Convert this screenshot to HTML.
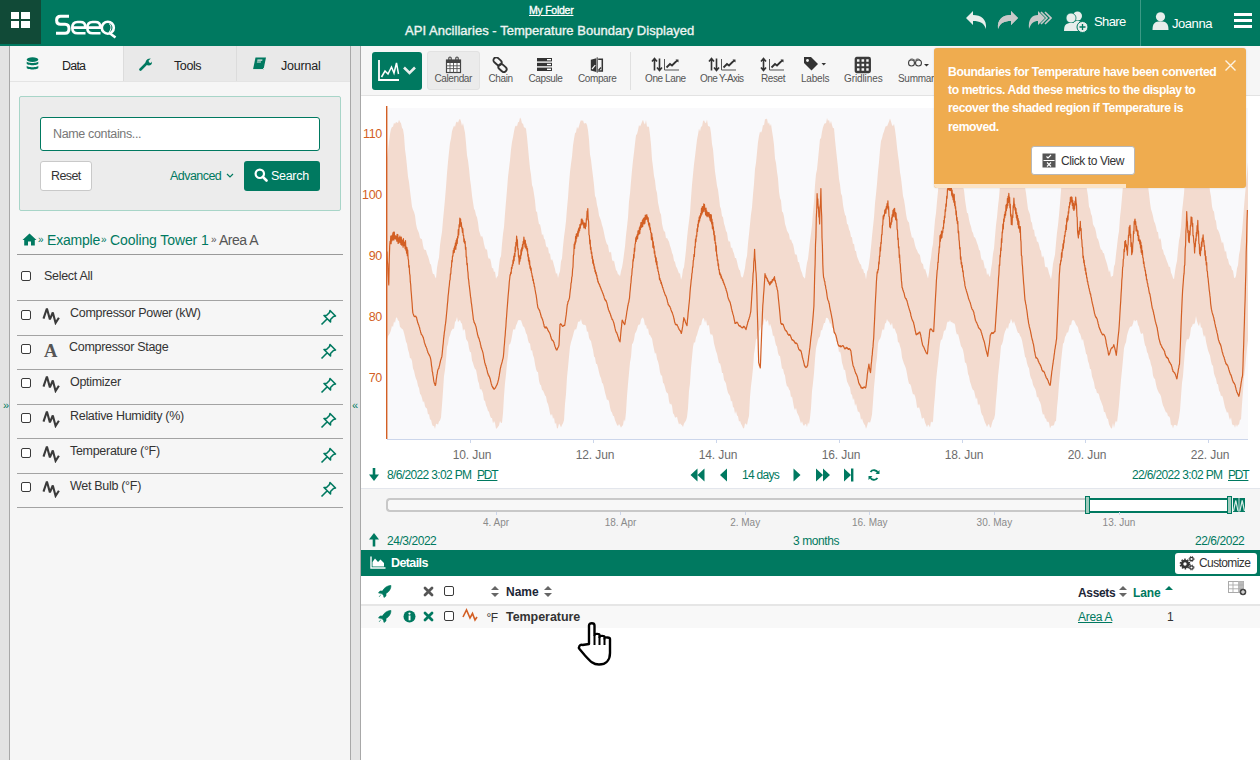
<!DOCTYPE html>
<html><head><meta charset="utf-8">
<style>
*{box-sizing:border-box}
html,body{margin:0;padding:0;width:1260px;height:760px;overflow:hidden;background:#fff;font-family:"Liberation Sans",sans-serif;color:#333}
.a{position:absolute;white-space:nowrap;line-height:1}
.g{color:#007960}
.cb{position:absolute;width:10px;height:10px;border:1.1px solid #3a3a3a;border-radius:2px;background:#fff}
.tl{position:absolute;font-size:10px;color:#555;line-height:1;white-space:nowrap;letter-spacing:-0.4px}
.xl{position:absolute;font-size:12px;color:#6d6d6d;line-height:1;white-space:nowrap;width:60px;text-align:center;letter-spacing:-0.1px}
.yl{position:absolute;font-size:12.5px;color:#d35f24;line-height:1;white-space:nowrap;width:40px;text-align:right;letter-spacing:-0.3px}
.sl{position:absolute;font-size:10px;color:#8a8a8a;line-height:1;white-space:nowrap;width:60px;text-align:center}
.it{position:absolute;font-size:12.5px;color:#333;line-height:1;white-space:nowrap;letter-spacing:-0.3px}
</style></head><body>
<!-- HEADER -->
<div class="a" style="left:0;top:0;width:1260px;height:46px;background:#007960"></div>
<div class="a" style="left:0;top:0;width:41px;height:44px;background:#114a37"></div>
<div class="a" style="left:11px;top:12px;width:8px;height:7px;background:#fff"></div>
<div class="a" style="left:21px;top:12px;width:9px;height:7px;background:#fff"></div>
<div class="a" style="left:11px;top:21px;width:8px;height:7px;background:#fff"></div>
<div class="a" style="left:21px;top:21px;width:9px;height:7px;background:#fff"></div>
<svg class="a" style="left:54px;top:13px" width="64" height="27" viewBox="54 13 64 27">
 <path d="M69 16.3 H60.5 C57.5 16.3 56.6 18 56.6 20.3 C56.6 22.8 57.8 24.3 60.5 24.3 H65 C67.8 24.3 69 25.8 69 28.8 C69 31.8 67.8 33.3 65 33.3 H56" stroke="#fff" stroke-width="3" fill="none"/>
 <path d="M85.5 33.3 H77.5 C74.2 33.3 72.3 31.5 72.3 27.8 C72.3 24 74.2 22 77.5 22 H80.5 C83.8 22 85.2 23.6 85.2 26.5 V27.6 H73.5" stroke="#fff" stroke-width="2.6" fill="none"/>
 <path d="M100.5 33.3 H92.5 C89.2 33.3 87.3 31.5 87.3 27.8 C87.3 24 89.2 22 92.5 22 H95.5 C98.8 22 100.2 23.6 100.2 26.5 V27.6 H88.5" stroke="#fff" stroke-width="2.6" fill="none"/>
 <circle cx="107.8" cy="27.7" r="6" stroke="#fff" stroke-width="2.6" fill="none"/>
 <path d="M109 23.5 C111.5 25 111.5 30 109 32" stroke="#fff" stroke-width="1" fill="none"/>
 <path d="M109.5 33 L115.5 37.5" stroke="#fff" stroke-width="2.6"/>
</svg>
<div id="myfolder" class="a" style="left:529px;top:4.8px;font-size:10.5px;font-weight:400;color:#fff;text-decoration:underline;letter-spacing:-0.25px;-webkit-text-stroke:0.35px #fff">My Folder</div>
<div id="title" class="a" style="left:405px;top:23.5px;font-size:13px;color:#eef4f2;letter-spacing:0.04px;-webkit-text-stroke:0.35px #eef4f2">API Ancillaries - Temperature Boundary Displayed</div>
<!-- undo/redo -->
<svg class="a" style="left:964px;top:10px" width="90" height="22" viewBox="0 0 90 22">
 <path d="M2 8 L9 1 L9 5 C17 5 23 9 22 19 C20 13 16 11 9 11 L9 15 Z" fill="#e8eeec"/>
 <path d="M54 8 L47 1 L47 5 C39 5 33 9 34 19 C36 13 40 11 47 11 L47 15 Z" transform="translate(0,0)" fill="#c9c9c9"/>
 <path d="M35 8 L28 1 L28 5 C20 5 14 9 15 19 C17 13 21 11 28 11 L28 15 Z" transform="translate(0,0)" fill="none"/>
 <path d="M54 8 L47 1 L47 5 C39 5 33 9 34 19 C36 13 40 11 47 11 L47 15 Z" transform="translate(31,0) translate(-31,0) translate(0,0)" fill="none"/>
</svg>
<svg class="a" style="left:996px;top:11px" width="24" height="20" viewBox="0 0 24 20">
 <path d="M22 7 L15 0 L15 4 C7 4 1 8 2 18 C4 12 8 10 15 10 L15 14 Z" fill="#c9c9c9"/>
</svg>
<svg class="a" style="left:1028px;top:11px" width="24" height="20" viewBox="0 0 24 20">
 <path d="M17 7 L10 0 L10 4 C4 4 0 8 1 18 C3 12 6 10 10 10 L10 14 Z" fill="#c9c9c9"/>
 <path d="M13 1 L19 7 L13 13 M17 1 L23 7 L17 13" stroke="#c9c9c9" stroke-width="1.6" fill="none"/>
</svg>
<svg class="a" style="left:1063px;top:11px" width="28" height="22" viewBox="0 0 28 22">
 <circle cx="14.5" cy="5" r="4.5" fill="#e8eeec"/>
 <path d="M9 18 C9 12 11 10 14.5 10 C18 10 20 12 20 18 Z" fill="#e8eeec"/>
 <circle cx="8" cy="7" r="5" fill="#e8eeec" stroke="#007960" stroke-width="0.8"/>
 <path d="M1 20 C1 14 3 12 8 12 C13 12 15 14 15 20 Z" fill="#e8eeec"/>
 <circle cx="19.5" cy="16" r="5.5" fill="#e8eeec" stroke="#007960" stroke-width="1"/>
 <path d="M19.5 13 V19 M16.5 16 H22.5" stroke="#007960" stroke-width="1.3"/>
</svg>
<div id="share" class="a" style="left:1094px;top:15px;font-size:13px;color:#fff;letter-spacing:-0.6px">Share</div>
<div class="a" style="left:1140px;top:0;width:1px;height:46px;background:#3c9a86"></div>
<svg class="a" style="left:1152px;top:12px" width="17" height="19" viewBox="0 0 17 19">
 <circle cx="8.5" cy="4.8" r="4.6" fill="#e8eeec"/>
 <path d="M0.5 18 C0.5 11 3 9.5 8.5 9.5 C14 9.5 16.5 11 16.5 18 Z" fill="#e8eeec"/>
</svg>
<div id="joanna" class="a" style="left:1172px;top:17px;font-size:13px;color:#fff;letter-spacing:-0.45px">Joanna</div>
<div class="a" style="left:1234px;top:13px;width:18px;height:3px;background:#fff"></div>
<div class="a" style="left:1234px;top:19px;width:18px;height:3px;background:#fff"></div>
<div class="a" style="left:1234px;top:25px;width:18px;height:3px;background:#fff"></div>

<!-- LEFT PANEL -->
<div class="a" style="left:0;top:46px;width:9px;height:714px;background:#e3e3e3"></div>
<div class="a" style="left:9px;top:46px;width:1px;height:714px;background:#a8a8a8"></div>
<div class="a" style="left:10px;top:46px;width:340px;height:714px;background:#f6f6f6"></div>
<div class="a" style="left:350px;top:46px;width:1px;height:714px;background:#a8a8a8"></div>
<div class="a" style="left:351px;top:46px;width:9px;height:714px;background:#e4e4e4"></div>
<div class="a" style="left:360px;top:46px;width:1px;height:714px;background:#a8a8a8"></div>
<div class="a" style="left:3px;top:400px;font-size:11px;color:#007960">&#187;</div>
<div class="a" style="left:352px;top:400px;font-size:11px;color:#007960">&#171;</div>
<!-- tabs -->
<div class="a" style="left:10px;top:81px;width:340px;height:1px;background:#e4e4e4"></div>
<div class="a" style="left:123px;top:46px;width:113px;height:35px;background:#e9e9e9;border-left:1px solid #dcdcdc"></div>
<div class="a" style="left:236px;top:46px;width:114px;height:35px;background:#e9e9e9;border-left:1px solid #dcdcdc"></div>
<svg class="a" style="left:25.5px;top:57px" width="13" height="15" viewBox="0 0 13 15">
 <ellipse cx="6.5" cy="2.6" rx="5.8" ry="2.4" fill="#007960"/>
 <path d="M0.7 4.2 C0.7 6.5 12.3 6.5 12.3 4.2 V6.6 C12.3 8.9 0.7 8.9 0.7 6.6 Z" fill="#007960"/>
 <path d="M0.7 8.4 C0.7 10.7 12.3 10.7 12.3 8.4 V10.8 C12.3 13.1 0.7 13.1 0.7 10.8 Z" fill="#007960"/>
</svg>
<div class="a" style="left:62px;top:59.5px;font-size:12.5px;color:#222;letter-spacing:-0.8px">Data</div>
<svg class="a" style="left:139px;top:57px" width="14" height="14" viewBox="0 0 14 14">
 <path d="M1.5 12.5 L7.5 6.5" stroke="#007960" stroke-width="2.6" stroke-linecap="round"/>
 <path d="M7 7.5 C5.5 4.5 8 1 11.8 1.5 L9.5 3.8 L10.2 5.5 L12 6 L13 4.5 C13.5 8 10 10 7 7.5Z" fill="#007960"/>
</svg>
<div class="a" style="left:174px;top:59.5px;font-size:12.5px;color:#222;letter-spacing:-0.4px">Tools</div>
<svg class="a" style="left:252px;top:57px" width="15" height="14" viewBox="0 0 15 14">
 <path d="M3.5 0.5 H14 L11.5 12.5 H1 Z" fill="#007960"/>
 <path d="M1 12.5 H11 L11.8 11" stroke="#f0f0f0" stroke-width="0.8" fill="none"/>
 <rect x="6" y="2.5" width="5" height="1.2" fill="#e9e9e9" transform="skewX(-12)"/>
 <rect x="6" y="4.5" width="4" height="1" fill="#e9e9e9" transform="skewX(-12)"/>
</svg>
<div class="a" style="left:281px;top:59.5px;font-size:12.5px;color:#222;letter-spacing:-0.2px">Journal</div>
<!-- search box -->
<div class="a" style="left:19px;top:96px;width:322px;height:115px;background:#ececec;border:1px solid #a8d5c8;border-radius:2px"></div>
<div class="a" style="left:40px;top:117px;width:280px;height:34px;background:#fff;border:1px solid #007960;border-radius:3px"></div>
<div class="a" style="left:53px;top:127.5px;font-size:12.5px;color:#777;letter-spacing:-0.35px">Name contains...</div>
<div class="a" style="left:40px;top:161px;width:52px;height:30px;background:#fff;border:1px solid #c9c9c9;border-radius:3px"></div>
<div class="a" style="left:51px;top:170px;font-size:12.5px;color:#333;letter-spacing:-0.6px">Reset</div>
<div class="a" style="left:170px;top:170px;font-size:12.5px;color:#007960;letter-spacing:-0.55px">Advanced</div>
<svg class="a" style="left:226px;top:173px" width="8" height="6" viewBox="0 0 8 6"><path d="M1 1 L4 4 L7 1" stroke="#007960" stroke-width="1.2" fill="none"/></svg>
<div class="a" style="left:244px;top:161px;width:76px;height:30px;background:#007960;border-radius:3px"></div>
<svg class="a" style="left:254px;top:168px" width="14" height="14" viewBox="0 0 14 14">
 <circle cx="5.8" cy="5.8" r="4.2" stroke="#fff" stroke-width="2.2" fill="none"/>
 <path d="M8.8 8.8 L12.5 12.5" stroke="#fff" stroke-width="2.6" stroke-linecap="round"/>
</svg>
<div class="a" style="left:271px;top:170px;font-size:12.5px;color:#fff;letter-spacing:-0.3px">Search</div>
<!-- breadcrumb -->
<svg class="a" style="left:22px;top:233px" width="15" height="13" viewBox="0 0 15 13">
 <path d="M7.5 0.5 L14.5 7 L12.8 7 L12.8 12.5 L9 12.5 L9 8.5 L6 8.5 L6 12.5 L2.2 12.5 L2.2 7 L0.5 7 Z" fill="#007960"/>
</svg>
<div class="a" style="left:38px;top:235px;font-size:10px;color:#007960">&#187;</div>
<div class="a" style="left:47px;top:233px;font-size:14px;color:#007960;letter-spacing:-0.2px">Example</div>
<div class="a" style="left:101px;top:235px;font-size:10px;color:#007960">&#187;</div>
<div class="a" style="left:110px;top:233px;font-size:14px;color:#007960;letter-spacing:-0.1px">Cooling Tower 1</div>
<div class="a" style="left:211px;top:235px;font-size:10px;color:#555">&#187;</div>
<div class="a" style="left:219px;top:233px;font-size:14px;color:#555;letter-spacing:-0.5px">Area A</div>
<div class="a" style="left:17px;top:254px;width:326px;height:1px;background:#9a9a9a"></div>
<div class="cb" style="left:21px;top:271px"></div>
<div class="it" style="left:44px;top:269.5px">Select All</div>
<div class="a" style="left:17px;top:300px;width:326px;height:1.3px;background:#a3a3a3"></div>
<div class="a" style="left:17px;top:335px;width:326px;height:1.3px;background:#a3a3a3"></div>
<div class="a" style="left:17px;top:369px;width:326px;height:1.3px;background:#a3a3a3"></div>
<div class="a" style="left:17px;top:404px;width:326px;height:1.3px;background:#a3a3a3"></div>
<div class="a" style="left:17px;top:438px;width:326px;height:1.3px;background:#a3a3a3"></div>
<div class="a" style="left:17px;top:473px;width:326px;height:1.3px;background:#a3a3a3"></div>
<div class="a" style="left:17px;top:507px;width:326px;height:1.3px;background:#a3a3a3"></div>
<div class="cb" style="left:21px;top:309.8px"></div>
<svg class="a" style="left:42px;top:306.0px" width="19" height="19" viewBox="0 0 19 19"><path d="M1.5 12.6 L4.9 2.5 L7.9 13.4 L10.8 6.5 L13.6 16.9 L16.9 11.8" stroke="#3a3a3a" stroke-width="2.1" fill="none" stroke-linejoin="miter" stroke-miterlimit="3"/></svg>
<div class="it" style="left:70px;top:307.2px">Compressor Power (kW)</div>
<svg class="a" style="left:320px;top:308.8px" width="17" height="17" viewBox="0 0 17 17"><path d="M10 1.5 L15.5 7 L13.5 7.5 L10.5 10.5 L10.5 13 L4 6.5 L6.5 6.5 L9.5 3.5 Z M7 10 L1.5 15.5" stroke="#007960" stroke-width="1.6" fill="none" stroke-linejoin="round"/></svg>
<div class="cb" style="left:21px;top:344.0px"></div>
<div class="a" style="left:44px;top:342.0px;font-family:'Liberation Serif';font-size:18.5px;font-weight:700;color:#555">A</div>
<div class="it" style="left:69px;top:341.4px">Compressor Stage</div>
<svg class="a" style="left:320px;top:343.0px" width="17" height="17" viewBox="0 0 17 17"><path d="M10 1.5 L15.5 7 L13.5 7.5 L10.5 10.5 L10.5 13 L4 6.5 L6.5 6.5 L9.5 3.5 Z M7 10 L1.5 15.5" stroke="#007960" stroke-width="1.6" fill="none" stroke-linejoin="round"/></svg>
<div class="cb" style="left:21px;top:378.2px"></div>
<svg class="a" style="left:42px;top:374.4px" width="19" height="19" viewBox="0 0 19 19"><path d="M1.5 12.6 L4.9 2.5 L7.9 13.4 L10.8 6.5 L13.6 16.9 L16.9 11.8" stroke="#3a3a3a" stroke-width="2.1" fill="none" stroke-linejoin="miter" stroke-miterlimit="3"/></svg>
<div class="it" style="left:70px;top:375.6px">Optimizer</div>
<svg class="a" style="left:320px;top:377.2px" width="17" height="17" viewBox="0 0 17 17"><path d="M10 1.5 L15.5 7 L13.5 7.5 L10.5 10.5 L10.5 13 L4 6.5 L6.5 6.5 L9.5 3.5 Z M7 10 L1.5 15.5" stroke="#007960" stroke-width="1.6" fill="none" stroke-linejoin="round"/></svg>
<div class="cb" style="left:21px;top:412.7px"></div>
<svg class="a" style="left:42px;top:408.9px" width="19" height="19" viewBox="0 0 19 19"><path d="M1.5 12.6 L4.9 2.5 L7.9 13.4 L10.8 6.5 L13.6 16.9 L16.9 11.8" stroke="#3a3a3a" stroke-width="2.1" fill="none" stroke-linejoin="miter" stroke-miterlimit="3"/></svg>
<div class="it" style="left:70px;top:410.1px">Relative Humidity (%)</div>
<svg class="a" style="left:320px;top:411.7px" width="17" height="17" viewBox="0 0 17 17"><path d="M10 1.5 L15.5 7 L13.5 7.5 L10.5 10.5 L10.5 13 L4 6.5 L6.5 6.5 L9.5 3.5 Z M7 10 L1.5 15.5" stroke="#007960" stroke-width="1.6" fill="none" stroke-linejoin="round"/></svg>
<div class="cb" style="left:21px;top:447.8px"></div>
<svg class="a" style="left:42px;top:444.0px" width="19" height="19" viewBox="0 0 19 19"><path d="M1.5 12.6 L4.9 2.5 L7.9 13.4 L10.8 6.5 L13.6 16.9 L16.9 11.8" stroke="#3a3a3a" stroke-width="2.1" fill="none" stroke-linejoin="miter" stroke-miterlimit="3"/></svg>
<div class="it" style="left:70px;top:445.2px">Temperature (°F)</div>
<svg class="a" style="left:320px;top:446.8px" width="17" height="17" viewBox="0 0 17 17"><path d="M10 1.5 L15.5 7 L13.5 7.5 L10.5 10.5 L10.5 13 L4 6.5 L6.5 6.5 L9.5 3.5 Z M7 10 L1.5 15.5" stroke="#007960" stroke-width="1.6" fill="none" stroke-linejoin="round"/></svg>
<div class="cb" style="left:21px;top:482.3px"></div>
<svg class="a" style="left:42px;top:478.5px" width="19" height="19" viewBox="0 0 19 19"><path d="M1.5 12.6 L4.9 2.5 L7.9 13.4 L10.8 6.5 L13.6 16.9 L16.9 11.8" stroke="#3a3a3a" stroke-width="2.1" fill="none" stroke-linejoin="miter" stroke-miterlimit="3"/></svg>
<div class="it" style="left:70px;top:479.7px">Wet Bulb (°F)</div>
<svg class="a" style="left:320px;top:481.3px" width="17" height="17" viewBox="0 0 17 17"><path d="M10 1.5 L15.5 7 L13.5 7.5 L10.5 10.5 L10.5 13 L4 6.5 L6.5 6.5 L9.5 3.5 Z M7 10 L1.5 15.5" stroke="#007960" stroke-width="1.6" fill="none" stroke-linejoin="round"/></svg>

<!-- RIGHT PANE -->
<div class="a" style="left:361px;top:46px;width:899px;height:50px;background:#f6f6f6;border-bottom:1px solid #e3e3e3"></div>
<div class="a" style="left:372px;top:52px;width:50px;height:38px;background:#007960;border-radius:3px"></div>
<svg class="a" style="left:372px;top:52px" width="50" height="38" viewBox="0 0 50 38">
 <path d="M7 8 V28 H27" stroke="#fff" stroke-width="1.8" fill="none"/>
 <path d="M9.5 25 L13 19 L16 22 L19.5 15 L22 21 L24.5 11 L26.5 22" stroke="#fff" stroke-width="1.5" fill="none"/>
 <path d="M32 15.5 L37.5 21 L43 15.5" stroke="#e8eeec" stroke-width="2.6" fill="none"/>
</svg>
<div class="a" style="left:427px;top:51px;width:53px;height:39px;background:#ebebeb;border-radius:3px;border:1px solid #e2e2e2"></div>
<!-- calendar -->
<svg class="a" style="left:445px;top:56px" width="17" height="18" viewBox="0 0 17 18">
 <rect x="1.5" y="4" width="14" height="12.5" fill="#fff" stroke="#444" stroke-width="1.2"/>
 <rect x="1.5" y="4" width="14" height="3" fill="#444"/>
 <path d="M1.5 9.8 H15.5 M1.5 12.6 H15.5 M5 7 V16.5 M8.5 7 V16.5 M12 7 V16.5" stroke="#555" stroke-width="0.9"/>
 <path d="M3.8 5 V2.2 A1.2 1.2 0 0 1 6.2 2.2 V5 M10.8 5 V2.2 A1.2 1.2 0 0 1 13.2 2.2 V5" stroke="#444" stroke-width="1.1" fill="none"/>
</svg>
<div class="tl" style="left:434.5px;top:74px">Calendar</div>
<!-- chain -->
<svg class="a" style="left:492px;top:57px" width="17" height="16" viewBox="0 0 17 16">
 <rect x="1" y="1.5" width="9" height="5.6" rx="2.8" transform="rotate(42 5.5 4.3)" fill="none" stroke="#333" stroke-width="1.9"/>
 <rect x="6" y="8.3" width="9" height="5.6" rx="2.8" transform="rotate(42 10.5 11.1)" fill="none" stroke="#333" stroke-width="1.9"/>
</svg>
<div class="tl" style="left:488.5px;top:74px">Chain</div>
<!-- capsule -->
<svg class="a" style="left:536px;top:57px" width="17" height="15" viewBox="0 0 17 15">
 <rect x="1" y="1" width="15" height="3.4" fill="#333"/>
 <rect x="1" y="5.8" width="15" height="3.4" fill="#333"/>
 <rect x="1" y="10.6" width="15" height="3.4" fill="#333"/>
 <rect x="11" y="2" width="4" height="1.4" fill="#fff"/>
 <rect x="11" y="6.8" width="4" height="1.4" fill="#fff"/>
 <rect x="11" y="11.6" width="4" height="1.4" fill="#fff"/>
</svg>
<div class="tl" style="left:528.5px;top:74px">Capsule</div>
<!-- compare -->
<svg class="a" style="left:590px;top:57px" width="14" height="16" viewBox="0 0 14 16">
 <path d="M0.8 2.8 L6.3 1.2 V15 L0.8 13.4 Z" fill="#333"/>
 <path d="M2 12 L5.3 8.2" stroke="#f6f6f6" stroke-width="1.2"/>
 <path d="M7.2 0.3 V15.7" stroke="#333" stroke-width="1"/>
 <path d="M8.2 2.2 H12.3 V14 H8.2" fill="none" stroke="#333" stroke-width="1.5"/>
 <path d="M8.6 13.2 L11 10.5" stroke="#333" stroke-width="1.4"/>
</svg>
<div class="tl" style="left:578px;top:74px">Compare</div>
<div class="a" style="left:630px;top:52px;width:1px;height:38px;background:#e0e0e0"></div>
<!-- one lane -->
<svg class="a" style="left:651px;top:57px" width="30" height="15" viewBox="0 0 30 15">
 <path d="M3.5 13.5 V2 M1 4.5 L3.5 1.5 L6 4.5" stroke="#333" stroke-width="1.6" fill="none"/>
 <path d="M8.5 1.5 V13 M6 10.5 L8.5 13.5 L11 10.5" stroke="#333" stroke-width="1.6" fill="none"/>
 <path d="M13.5 2 V13 H28" stroke="#555" stroke-width="1" fill="none"/>
 <path d="M15.5 10.5 L19 7 L21 8.5 L24.5 5 L26.5 3.5" stroke="#333" stroke-width="1.8" fill="none"/><path d="M24.5 2.5 H27.5 V5.5 Z" fill="#333"/>
</svg>
<div class="tl" style="left:645px;top:74px">One Lane</div>
<svg class="a" style="left:708px;top:57px" width="30" height="15" viewBox="0 0 30 15">
 <path d="M3.5 13.5 V2 M1 4.5 L3.5 1.5 L6 4.5" stroke="#333" stroke-width="1.6" fill="none"/>
 <path d="M8.5 1.5 V13 M6 10.5 L8.5 13.5 L11 10.5" stroke="#333" stroke-width="1.6" fill="none"/>
 <path d="M13.5 2 V13 H28" stroke="#555" stroke-width="1" fill="none"/>
 <path d="M15.5 10.5 L19 7 L21 8.5 L24.5 5 L26.5 3.5" stroke="#333" stroke-width="1.8" fill="none"/><path d="M24.5 2.5 H27.5 V5.5 Z" fill="#333"/>
</svg>
<div class="tl" style="left:700px;top:74px;letter-spacing:-0.6px">One Y-Axis</div>
<svg class="a" style="left:760px;top:57px" width="26" height="15" viewBox="0 0 26 15">
 <path d="M3.5 13 V2 M1 4.5 L3.5 1.5 L6 4.5 M1 10.5 L3.5 13.5 L6 10.5" stroke="#333" stroke-width="1.6" fill="none"/>
 <path d="M9.5 2 V13 H24" stroke="#555" stroke-width="1" fill="none"/>
 <path d="M11.5 10.5 L15 7 L17 8.5 L20.5 5 L22.5 3.5" stroke="#333" stroke-width="1.8" fill="none"/><path d="M20.5 2.5 H23.5 V5.5 Z" fill="#333"/>
</svg>
<div class="tl" style="left:761px;top:74px">Reset</div>
<svg class="a" style="left:803px;top:56px" width="24" height="16" viewBox="0 0 24 16">
 <path d="M1 1 H8 L15 8 L8.5 14.5 L1 7 Z" fill="#333"/>
 <circle cx="4.5" cy="4.5" r="1.4" fill="#f6f6f6"/>
 <path d="M18.5 7 L23 7 L20.75 9.5 Z" fill="#333"/>
</svg>
<div class="tl" style="left:801px;top:74px;letter-spacing:-0.2px">Labels</div>
<svg class="a" style="left:854px;top:56px" width="18" height="18" viewBox="0 0 18 18">
 <rect x="1.8" y="2" width="14" height="14" rx="1" fill="none" stroke="#3a3a3a" stroke-width="2.3"/>
 <path d="M6.5 2 V16 M11.2 2 V16 M1.8 6.7 H15.8 M1.8 11.3 H15.8" stroke="#3a3a3a" stroke-width="2.1"/>
</svg>
<div class="tl" style="left:844px;top:74px;letter-spacing:-0.1px">Gridlines</div>
<svg class="a" style="left:906px;top:57px" width="26" height="12" viewBox="0 0 26 12">
 <circle cx="5.5" cy="6" r="3" fill="none" stroke="#444" stroke-width="1.1"/>
 <circle cx="12.5" cy="6" r="3" fill="none" stroke="#444" stroke-width="1.1"/>
 <path d="M3 4 C4 1.5 7 1.5 9 3.5 C10.5 1.5 13 1.5 15 4" stroke="#444" stroke-width="1" fill="none"/>
 <path d="M18 7 L23 7 L20.5 9.5 Z" fill="#333"/>
</svg>
<div class="tl" style="left:898px;top:74px;letter-spacing:-0.3px">Summary</div>

<svg class="a" style="left:0;top:0" width="1260" height="760" viewBox="0 0 1260 760">
<rect x="387" y="108" width="861" height="331" fill="#f9f9fb"/>
<path d="M387,157.9 L388,150.2 L389,141.9 L390,134.0 L391,129.0 L392,126.9 L393,126.8 L394,122.7 L395,123.9 L396,121.9 L397,122.5 L398,122.9 L399,119.7 L400,122.0 L401,123.2 L402,127.8 L403,129.2 L404,135.5 L405,149.5 L406,156.8 L407,166.2 L408,176.7 L409,182.0 L410,190.7 L411,198.5 L412,206.7 L413,209.7 L414,212.1 L415,215.4 L416,223.8 L417,228.5 L418,230.7 L419,233.3 L420,238.1 L421,238.8 L422,239.2 L423,245.5 L424,249.4 L425,249.7 L426,250.3 L427,254.1 L428,256.3 L429,259.5 L430,263.7 L431,264.5 L432,270.0 L433,274.3 L434,273.7 L435,276.8 L436,278.6 L437,267.7 L438,261.8 L439,257.6 L440,245.3 L441,238.0 L442,232.0 L443,219.9 L444,209.7 L445,199.1 L446,187.0 L447,173.2 L448,161.8 L449,151.9 L450,143.1 L451,138.4 L452,131.3 L453,128.3 L454,125.6 L455,126.9 L456,122.6 L457,121.5 L458,122.7 L459,119.9 L460,118.8 L461,121.4 L462,126.0 L463,123.1 L464,128.0 L465,132.8 L466,143.0 L467,155.3 L468,160.4 L469,168.4 L470,179.1 L471,186.0 L472,195.5 L473,202.3 L474,208.7 L475,210.4 L476,215.2 L477,217.2 L478,222.6 L479,230.5 L480,233.6 L481,237.0 L482,235.7 L483,238.4 L484,243.9 L485,248.0 L486,249.7 L487,249.2 L488,257.0 L489,258.9 L490,258.3 L491,261.9 L492,268.4 L493,267.7 L494,272.3 L495,271.3 L496,278.7 L497,276.8 L498,275.9 L499,265.8 L500,258.3 L501,256.2 L502,244.0 L503,234.0 L504,226.9 L505,213.6 L506,201.6 L507,189.8 L508,177.0 L509,168.5 L510,160.2 L511,149.6 L512,142.1 L513,137.2 L514,131.6 L515,126.7 L516,125.5 L517,126.5 L518,122.2 L519,121.9 L520,117.4 L521,119.1 L522,123.4 L523,123.4 L524,127.4 L525,127.5 L526,128.8 L527,137.0 L528,147.5 L529,158.4 L530,168.4 L531,174.7 L532,184.9 L533,187.8 L534,194.1 L535,200.7 L536,211.5 L537,211.8 L538,218.8 L539,224.2 L540,224.2 L541,228.7 L542,235.5 L543,233.7 L544,238.8 L545,239.7 L546,245.8 L547,247.6 L548,247.2 L549,253.7 L550,253.2 L551,260.4 L552,259.1 L553,261.4 L554,265.4 L555,269.0 L556,274.1 L557,272.7 L558,277.9 L559,273.9 L560,271.2 L561,261.3 L562,258.4 L563,246.5 L564,236.9 L565,229.8 L566,220.9 L567,208.2 L568,197.8 L569,183.4 L570,172.0 L571,163.8 L572,156.8 L573,145.6 L574,138.9 L575,133.2 L576,132.3 L577,126.8 L578,129.0 L579,126.1 L580,122.4 L581,120.1 L582,121.1 L583,120.2 L584,123.5 L585,123.3 L586,123.1 L587,125.1 L588,130.3 L589,139.5 L590,154.5 L591,159.8 L592,168.4 L593,176.2 L594,185.1 L595,195.9 L596,198.1 L597,205.1 L598,208.7 L599,215.6 L600,217.9 L601,220.8 L602,225.0 L603,228.0 L604,232.8 L605,237.7 L606,241.5 L607,244.2 L608,245.1 L609,251.5 L610,252.8 L611,251.6 L612,259.5 L613,261.4 L614,260.6 L615,265.4 L616,269.9 L617,271.2 L618,274.5 L619,274.4 L620,276.5 L621,271.1 L622,267.6 L623,261.7 L624,254.0 L625,246.4 L626,235.2 L627,226.7 L628,217.5 L629,201.6 L630,193.5 L631,181.6 L632,170.2 L633,160.4 L634,152.4 L635,143.4 L636,135.3 L637,133.9 L638,130.3 L639,125.0 L640,126.4 L641,124.4 L642,121.8 L643,119.7 L644,122.9 L645,124.5 L646,120.0 L647,126.7 L648,126.4 L649,126.9 L650,134.7 L651,144.6 L652,159.2 L653,167.0 L654,175.9 L655,180.6 L656,189.4 L657,193.1 L658,202.4 L659,207.2 L660,212.4 L661,214.6 L662,223.6 L663,228.2 L664,231.4 L665,231.5 L666,238.5 L667,237.7 L668,240.0 L669,241.8 L670,245.8 L671,248.4 L672,252.8 L673,254.9 L674,260.8 L675,262.1 L676,266.6 L677,267.9 L678,270.7 L679,273.4 L680,273.3 L681,279.8 L682,276.7 L683,269.4 L684,267.2 L685,259.0 L686,250.1 L687,238.3 L688,229.1 L689,221.3 L690,213.0 L691,198.3 L692,184.8 L693,174.5 L694,164.2 L695,156.5 L696,147.9 L697,139.7 L698,134.4 L699,128.4 L700,131.6 L701,126.6 L702,126.5 L703,121.2 L704,120.3 L705,122.6 L706,123.3 L707,119.4 L708,126.1 L709,126.2 L710,126.9 L711,132.9 L712,144.0 L713,149.2 L714,160.6 L715,171.6 L716,178.4 L717,185.7 L718,189.8 L719,197.6 L720,206.6 L721,209.1 L722,216.2 L723,217.1 L724,223.6 L725,226.6 L726,231.1 L727,232.6 L728,239.7 L729,242.1 L730,241.1 L731,248.3 L732,247.2 L733,251.2 L734,253.6 L735,257.9 L736,258.1 L737,261.5 L738,266.3 L739,269.6 L740,270.5 L741,276.0 L742,277.7 L743,276.8 L744,272.8 L745,267.7 L746,259.8 L747,255.9 L748,243.3 L749,234.2 L750,224.3 L751,214.3 L752,207.5 L753,194.5 L754,183.7 L755,169.1 L756,162.8 L757,152.6 L758,142.1 L759,135.9 L760,131.5 L761,132.8 L762,130.6 L763,124.7 L764,125.5 L765,119.1 L766,119.3 L767,118.6 L768,124.0 L769,122.2 L770,126.2 L771,123.7 L772,131.0 L773,137.1 L774,145.0 L775,158.6 L776,163.0 L777,171.8 L778,178.5 L779,191.5 L780,198.2 L781,200.6 L782,211.5 L783,212.5 L784,216.8 L785,223.8 L786,227.1 L787,230.7 L788,232.6 L789,234.2 L790,240.0 L791,239.3 L792,242.5 L793,244.0 L794,248.6 L795,254.8 L796,254.0 L797,255.8 L798,262.3 L799,262.1 L800,267.1 L801,270.5 L802,272.7 L803,276.4 L804,277.4 L805,278.8 L806,269.6 L807,262.8 L808,259.1 L809,249.9 L810,241.1 L811,233.4 L812,225.0 L813,211.4 L814,201.6 L815,184.9 L816,173.9 L817,169.4 L818,159.4 L819,149.3 L820,139.1 L821,138.2 L822,131.8 L823,127.3 L824,124.6 L825,123.0 L826,123.6 L827,118.1 L828,120.9 L829,119.8 L830,123.9 L831,121.0 L832,124.9 L833,128.3 L834,128.1 L835,139.8 L836,149.5 L837,158.6 L838,167.5 L839,179.0 L840,184.6 L841,193.4 L842,195.7 L843,204.8 L844,210.5 L845,214.8 L846,216.2 L847,224.0 L848,224.5 L849,229.5 L850,231.4 L851,236.9 L852,237.2 L853,244.3 L854,243.5 L855,250.8 L856,250.9 L857,256.4 L858,259.1 L859,261.5 L860,264.0 L861,264.4 L862,269.6 L863,268.6 L864,273.0 L865,273.3 L866,279.6 L867,271.7 L868,269.8 L869,264.0 L870,256.2 L871,246.9 L872,236.2 L873,226.8 L874,217.4 L875,203.2 L876,194.0 L877,183.7 L878,171.5 L879,161.9 L880,150.1 L881,140.9 L882,138.3 L883,134.0 L884,131.6 L885,128.0 L886,125.7 L887,126.4 L888,124.1 L889,121.6 L890,118.5 L891,121.4 L892,125.1 L893,126.2 L894,123.8 L895,129.8 L896,137.2 L897,147.0 L898,155.2 L899,162.0 L900,172.3 L901,178.0 L902,186.4 L903,196.1 L904,199.7 L905,206.0 L906,213.7 L907,219.2 L908,221.4 L909,222.6 L910,229.3 L911,233.5 L912,237.9 L913,237.2 L914,240.5 L915,245.2 L916,248.5 L917,250.3 L918,252.8 L919,254.0 L920,255.2 L921,261.6 L922,263.6 L923,264.0 L924,269.8 L925,268.5 L926,271.8 L927,275.2 L928,278.4 L929,272.4 L930,263.2 L931,257.6 L932,248.8 L933,244.0 L934,231.7 L935,219.9 L936,212.9 L937,201.4 L938,191.2 L939,175.5 L940,164.6 L941,157.0 L942,145.3 L943,138.1 L944,138.6 L945,129.6 L946,129.2 L947,128.8 L948,123.5 L949,120.2 L950,122.8 L951,116.8 L952,122.3 L953,123.5 L954,121.8 L955,123.7 L956,126.3 L957,130.4 L958,140.8 L959,150.2 L960,160.8 L961,166.2 L962,179.0 L963,187.0 L964,190.1 L965,199.6 L966,206.2 L967,213.0 L968,213.2 L969,219.6 L970,223.8 L971,226.5 L972,231.2 L973,232.9 L974,236.9 L975,237.6 L976,239.7 L977,242.9 L978,245.5 L979,249.8 L980,250.8 L981,257.6 L982,260.5 L983,259.5 L984,263.9 L985,269.3 L986,267.5 L987,275.2 L988,273.0 L989,275.7 L990,277.1 L991,269.5 L992,263.3 L993,253.8 L994,248.5 L995,236.4 L996,225.1 L997,217.2 L998,206.2 L999,197.8 L1000,185.2 L1001,169.7 L1002,162.5 L1003,152.2 L1004,143.9 L1005,140.8 L1006,135.5 L1007,127.4 L1008,129.7 L1009,122.9 L1010,123.8 L1011,120.2 L1012,119.4 L1013,118.8 L1014,120.1 L1015,123.7 L1016,122.0 L1017,123.7 L1018,129.3 L1019,134.8 L1020,143.7 L1021,156.8 L1022,165.3 L1023,169.8 L1024,182.5 L1025,187.2 L1026,192.9 L1027,201.3 L1028,209.3 L1029,211.7 L1030,214.5 L1031,221.6 L1032,222.7 L1033,229.9 L1034,229.2 L1035,237.0 L1036,236.0 L1037,241.9 L1038,241.4 L1039,244.9 L1040,249.4 L1041,251.0 L1042,257.8 L1043,255.4 L1044,258.2 L1045,266.2 L1046,267.4 L1047,266.8 L1048,268.9 L1049,273.3 L1050,276.0 L1051,279.5 L1052,272.9 L1053,263.7 L1054,259.0 L1055,254.5 L1056,243.0 L1057,232.6 L1058,224.9 L1059,215.1 L1060,203.6 L1061,190.4 L1062,176.6 L1063,165.7 L1064,160.1 L1065,149.5 L1066,140.9 L1067,137.1 L1068,132.7 L1069,127.5 L1070,128.8 L1071,124.8 L1072,120.2 L1073,119.3 L1074,122.3 L1075,118.4 L1076,122.2 L1077,123.3 L1078,127.2 L1079,126.6 L1080,127.3 L1081,138.1 L1082,146.8 L1083,157.5 L1084,165.6 L1085,172.6 L1086,183.6 L1087,190.1 L1088,195.9 L1089,206.8 L1090,208.7 L1091,213.8 L1092,216.2 L1093,224.3 L1094,226.3 L1095,228.1 L1096,232.1 L1097,238.1 L1098,238.9 L1099,242.3 L1100,246.8 L1101,249.8 L1102,249.8 L1103,252.9 L1104,253.3 L1105,257.8 L1106,260.7 L1107,264.1 L1108,268.1 L1109,272.4 L1110,269.9 L1111,277.6 L1112,275.7 L1113,276.3 L1114,266.3 L1115,263.9 L1116,254.3 L1117,246.1 L1118,237.3 L1119,231.2 L1120,217.3 L1121,208.6 L1122,197.0 L1123,185.8 L1124,171.5 L1125,163.8 L1126,153.6 L1127,144.6 L1128,137.5 L1129,134.0 L1130,130.4 L1131,128.3 L1132,126.3 L1133,121.0 L1134,122.0 L1135,121.5 L1136,119.4 L1137,124.1 L1138,123.3 L1139,121.3 L1140,127.2 L1141,127.0 L1142,133.2 L1143,145.9 L1144,155.1 L1145,161.4 L1146,170.1 L1147,179.6 L1148,185.7 L1149,193.5 L1150,202.6 L1151,209.2 L1152,212.3 L1153,216.3 L1154,221.2 L1155,223.3 L1156,226.8 L1157,232.0 L1158,231.7 L1159,239.9 L1160,237.7 L1161,240.3 L1162,248.7 L1163,249.9 L1164,254.3 L1165,255.4 L1166,258.7 L1167,261.5 L1168,264.1 L1169,267.3 L1170,266.5 L1171,272.7 L1172,274.7 L1173,278.3 L1174,279.2 L1175,271.4 L1176,265.3 L1177,260.9 L1178,250.1 L1179,240.5 L1180,235.7 L1181,226.9 L1182,211.5 L1183,203.0 L1184,193.4 L1185,178.0 L1186,169.7 L1187,157.1 L1188,146.5 L1189,139.5 L1190,134.3 L1191,129.6 L1192,130.9 L1193,128.7 L1194,122.3 L1195,124.4 L1196,122.8 L1197,120.5 L1198,120.4 L1199,120.4 L1200,124.4 L1201,122.1 L1202,128.9 L1203,127.7 L1204,135.9 L1205,148.1 L1206,156.9 L1207,165.9 L1208,172.7 L1209,182.5 L1210,191.2 L1211,196.4 L1212,206.3 L1213,210.5 L1214,211.5 L1215,219.3 L1216,221.1 L1217,229.0 L1218,230.1 L1219,232.3 L1220,235.2 L1221,239.5 L1222,243.6 L1223,241.6 L1224,247.0 L1225,252.2 L1226,250.4 L1227,257.9 L1228,259.3 L1229,263.8 L1230,265.4 L1231,266.1 L1232,270.0 L1233,270.5 L1234,277.5 L1235,278.3 L1236,275.8 L1237,268.3 L1238,265.2 L1239,254.7 L1240,250.1 L1241,239.4 L1242,231.8 L1243,219.9 L1244,207.0 L1245,195.0 L1246,184.2 L1247,173.5 L1248,162.3 L1248,340.4 L1247,348.0 L1246,358.6 L1245,369.7 L1244,377.0 L1243,391.3 L1242,404.2 L1241,419.7 L1240,419.4 L1239,424.8 L1238,424.6 L1237,426.9 L1236,424.2 L1235,427.7 L1234,424.7 L1233,425.6 L1232,423.7 L1231,417.2 L1230,419.9 L1229,417.1 L1228,411.7 L1227,413.0 L1226,410.0 L1225,407.5 L1224,402.9 L1223,398.1 L1222,395.4 L1221,396.3 L1220,392.2 L1219,390.6 L1218,384.3 L1217,383.9 L1216,378.8 L1215,376.4 L1214,373.6 L1213,365.7 L1212,364.9 L1211,361.2 L1210,355.4 L1209,353.0 L1208,350.3 L1207,345.9 L1206,341.6 L1205,334.9 L1204,336.9 L1203,333.6 L1202,327.2 L1201,328.1 L1200,322.1 L1199,326.2 L1198,324.3 L1197,321.3 L1196,315.9 L1195,322.5 L1194,324.5 L1193,323.5 L1192,326.4 L1191,327.6 L1190,335.2 L1189,338.5 L1188,339.7 L1187,338.7 L1186,342.8 L1185,350.3 L1184,362.8 L1183,375.9 L1182,382.9 L1181,396.6 L1180,410.6 L1179,417.7 L1178,422.3 L1177,426.4 L1176,424.7 L1175,425.2 L1174,424.8 L1173,428.6 L1172,424.5 L1171,425.6 L1170,418.1 L1169,416.3 L1168,416.2 L1167,412.5 L1166,412.6 L1165,410.3 L1164,407.4 L1163,405.6 L1162,401.7 L1161,396.4 L1160,394.2 L1159,392.9 L1158,391.1 L1157,388.6 L1156,384.5 L1155,379.1 L1154,378.2 L1153,375.6 L1152,367.6 L1151,364.7 L1150,360.3 L1149,358.2 L1148,353.8 L1147,352.1 L1146,346.7 L1145,345.3 L1144,340.2 L1143,333.3 L1142,333.5 L1141,333.9 L1140,331.1 L1139,326.6 L1138,325.1 L1137,320.1 L1136,320.5 L1135,321.4 L1134,319.4 L1133,323.6 L1132,326.2 L1131,326.6 L1130,327.0 L1129,329.0 L1128,332.0 L1127,335.6 L1126,342.3 L1125,344.4 L1124,348.2 L1123,359.4 L1122,370.1 L1121,379.7 L1120,392.1 L1119,404.7 L1118,414.2 L1117,422.5 L1116,420.6 L1115,423.2 L1114,428.1 L1113,423.1 L1112,428.5 L1111,428.2 L1110,426.2 L1109,424.2 L1108,419.0 L1107,418.5 L1106,415.3 L1105,411.7 L1104,412.3 L1103,406.4 L1102,404.0 L1101,401.2 L1100,398.9 L1099,394.7 L1098,392.9 L1097,393.2 L1096,389.3 L1095,388.4 L1094,382.6 L1093,379.3 L1092,376.4 L1091,369.3 L1090,369.1 L1089,363.7 L1088,361.3 L1087,354.7 L1086,353.7 L1085,348.3 L1084,344.5 L1083,338.8 L1082,340.7 L1081,336.5 L1080,333.5 L1079,332.6 L1078,327.5 L1077,326.0 L1076,324.8 L1075,322.3 L1074,320.3 L1073,320.3 L1072,320.4 L1071,325.5 L1070,324.5 L1069,328.7 L1068,332.8 L1067,332.2 L1066,335.2 L1065,336.9 L1064,342.6 L1063,343.8 L1062,352.6 L1061,361.9 L1060,373.5 L1059,384.0 L1058,398.1 L1057,407.5 L1056,421.3 L1055,421.3 L1054,425.1 L1053,425.7 L1052,425.4 L1051,426.2 L1050,428.6 L1049,422.7 L1048,421.5 L1047,421.9 L1046,418.4 L1045,418.4 L1044,413.7 L1043,415.0 L1042,411.2 L1041,405.1 L1040,402.1 L1039,400.3 L1038,396.4 L1037,397.7 L1036,391.6 L1035,388.4 L1034,386.9 L1033,384.7 L1032,380.1 L1031,378.2 L1030,375.1 L1029,368.3 L1028,366.4 L1027,363.3 L1026,357.9 L1025,356.8 L1024,350.8 L1023,345.7 L1022,340.6 L1021,337.3 L1020,335.7 L1019,332.9 L1018,333.0 L1017,330.4 L1016,327.0 L1015,324.4 L1014,321.0 L1013,323.8 L1012,321.4 L1011,318.8 L1010,323.1 L1009,323.8 L1008,329.2 L1007,327.1 L1006,329.5 L1005,331.5 L1004,335.1 L1003,341.0 L1002,344.3 L1001,345.7 L1000,357.3 L999,366.9 L998,376.1 L997,390.0 L996,400.5 L995,414.7 L994,418.9 L993,420.2 L992,423.3 L991,427.3 L990,427.8 L989,423.7 L988,424.9 L987,427.1 L986,424.4 L985,422.4 L984,419.7 L983,416.1 L982,414.8 L981,412.0 L980,405.7 L979,403.5 L978,405.4 L977,397.2 L976,399.6 L975,395.1 L974,390.4 L973,390.0 L972,388.0 L971,384.6 L970,381.7 L969,376.2 L968,373.8 L967,366.5 L966,362.8 L965,362.8 L964,354.9 L963,349.9 L962,347.4 L961,346.3 L960,341.9 L959,337.7 L958,333.7 L957,334.7 L956,331.6 L955,324.8 L954,322.9 L953,323.4 L952,321.8 L951,322.4 L950,320.0 L949,322.3 L948,321.3 L947,323.1 L946,328.4 L945,330.7 L944,330.4 L943,335.5 L942,339.8 L941,339.5 L940,344.2 L939,353.4 L938,362.7 L937,371.3 L936,381.0 L935,395.6 L934,406.6 L933,421.4 L932,422.4 L931,421.4 L930,427.6 L929,425.4 L928,424.4 L927,427.3 L926,424.8 L925,422.5 L924,418.3 L923,417.4 L922,419.2 L921,414.2 L920,410.3 L919,407.0 L918,408.2 L917,407.3 L916,400.1 L915,396.0 L914,393.9 L913,394.6 L912,390.7 L911,386.0 L910,383.9 L909,383.8 L908,379.4 L907,373.7 L906,368.8 L905,366.0 L904,363.8 L903,360.8 L902,357.4 L901,349.2 L900,346.3 L899,342.3 L898,342.6 L897,334.4 L896,332.6 L895,329.4 L894,328.0 L893,329.0 L892,322.5 L891,325.6 L890,324.1 L889,321.5 L888,321.6 L887,318.9 L886,322.9 L885,323.5 L884,330.4 L883,328.7 L882,331.0 L881,336.2 L880,339.1 L879,340.1 L878,343.5 L877,357.4 L876,364.5 L875,377.1 L874,387.2 L873,401.8 L872,414.6 L871,419.4 L870,422.8 L869,422.1 L868,422.5 L867,426.2 L866,428.8 L865,425.3 L864,423.9 L863,421.8 L862,418.3 L861,420.1 L860,414.1 L859,411.5 L858,412.1 L857,408.0 L856,403.2 L855,405.9 L854,398.0 L853,400.2 L852,394.5 L851,394.3 L850,387.6 L849,386.1 L848,383.6 L847,381.6 L846,375.7 L845,369.6 L844,370.2 L843,366.1 L842,362.8 L841,354.9 L840,351.2 L839,352.4 L838,345.2 L837,342.4 L836,341.1 L835,334.0 L834,334.0 L833,327.8 L832,328.1 L831,323.0 L830,324.1 L829,320.4 L828,318.6 L827,317.8 L826,318.0 L825,322.9 L824,323.0 L823,326.5 L822,330.6 L821,330.0 L820,336.6 L819,337.6 L818,340.1 L817,344.3 L816,348.3 L815,359.3 L814,373.3 L813,383.0 L812,391.3 L811,407.9 L810,417.9 L809,424.4 L808,422.3 L807,427.3 L806,424.0 L805,424.3 L804,426.0 L803,424.6 L802,421.3 L801,423.5 L800,420.2 L799,416.5 L798,414.4 L797,412.5 L796,407.7 L795,410.3 L794,407.5 L793,402.1 L792,396.3 L791,397.6 L790,390.7 L789,389.6 L788,386.6 L787,386.4 L786,382.5 L785,375.5 L784,373.6 L783,368.4 L782,368.9 L781,362.3 L780,355.9 L779,355.8 L778,352.9 L777,346.4 L776,345.3 L775,341.1 L774,335.3 L773,336.6 L772,330.2 L771,326.5 L770,323.8 L769,326.5 L768,320.2 L767,320.6 L766,322.2 L765,318.2 L764,320.5 L763,325.4 L762,324.2 L761,326.2 L760,330.1 L759,330.6 L758,335.3 L757,338.6 L756,339.4 L755,347.8 L754,353.9 L753,368.2 L752,377.9 L751,385.9 L750,397.1 L749,415.9 L748,419.8 L747,425.0 L746,423.7 L745,423.4 L744,428.5 L743,428.0 L742,425.4 L741,423.7 L740,420.8 L739,421.8 L738,416.3 L737,415.5 L736,410.9 L735,414.1 L734,407.5 L733,407.2 L732,400.4 L731,401.7 L730,396.1 L729,394.6 L728,392.8 L727,388.9 L726,383.4 L725,381.5 L724,379.9 L723,373.1 L722,373.1 L721,366.7 L720,363.3 L719,363.2 L718,358.7 L717,353.7 L716,351.3 L715,347.3 L714,343.4 L713,336.6 L712,334.0 L711,335.1 L710,333.0 L709,325.0 L708,325.4 L707,325.2 L706,319.4 L705,322.7 L704,318.6 L703,318.0 L702,320.4 L701,325.4 L700,324.9 L699,328.3 L698,331.2 L697,334.9 L696,337.2 L695,343.0 L694,342.1 L693,346.9 L692,357.2 L691,367.8 L690,383.3 L689,391.0 L688,408.3 L687,417.1 L686,420.6 L685,422.0 L684,423.5 L683,426.9 L682,425.2 L681,424.4 L680,423.3 L679,424.6 L678,421.3 L677,416.7 L676,417.4 L675,417.4 L674,414.6 L673,413.2 L672,405.8 L671,403.4 L670,404.6 L669,401.2 L668,393.6 L667,393.1 L666,391.2 L665,387.2 L664,383.7 L663,382.7 L662,375.4 L661,375.4 L660,372.2 L659,365.5 L658,361.5 L657,359.0 L656,352.5 L655,354.1 L654,349.2 L653,344.4 L652,338.5 L651,337.1 L650,334.9 L649,334.5 L648,327.9 L647,329.6 L646,324.6 L645,325.8 L644,319.7 L643,317.6 L642,318.0 L641,319.5 L640,324.4 L639,324.4 L638,325.4 L637,329.6 L636,331.9 L635,333.6 L634,339.7 L633,343.1 L632,344.2 L631,357.0 L630,362.6 L629,373.3 L628,384.0 L627,396.1 L626,412.2 L625,421.7 L624,419.2 L623,425.2 L622,426.0 L621,427.8 L620,425.5 L619,424.1 L618,426.1 L617,425.1 L616,422.5 L615,420.3 L614,416.3 L613,415.8 L612,412.5 L611,411.2 L610,407.2 L609,401.4 L608,399.6 L607,400.1 L606,396.0 L605,392.4 L604,387.8 L603,383.7 L602,382.8 L601,378.3 L600,376.0 L599,372.2 L598,367.8 L597,363.9 L596,363.8 L595,357.6 L594,356.4 L593,349.7 L592,346.1 L591,341.1 L590,340.0 L589,337.8 L588,331.2 L587,332.1 L586,325.9 L585,324.8 L584,324.9 L583,324.4 L582,323.6 L581,319.1 L580,321.4 L579,321.5 L578,322.0 L577,326.8 L576,329.8 L575,329.1 L574,331.6 L573,335.5 L572,339.1 L571,342.2 L570,346.7 L569,356.8 L568,367.6 L567,377.2 L566,394.1 L565,403.9 L564,420.3 L563,423.3 L562,424.9 L561,427.5 L560,425.0 L559,423.4 L558,427.8 L557,428.7 L556,422.5 L555,424.2 L554,417.3 L553,419.0 L552,413.7 L551,415.7 L550,413.6 L549,407.9 L548,404.0 L547,401.9 L546,396.5 L545,395.5 L544,392.8 L543,390.5 L542,390.1 L541,385.2 L540,384.4 L539,380.8 L538,372.1 L537,371.8 L536,369.1 L535,364.0 L534,357.7 L533,355.3 L532,349.8 L531,350.9 L530,343.2 L529,343.2 L528,339.9 L527,334.8 L526,333.2 L525,329.6 L524,326.7 L523,326.5 L522,323.3 L521,320.3 L520,320.3 L519,320.0 L518,320.6 L517,323.4 L516,325.4 L515,329.9 L514,328.7 L513,330.3 L512,336.1 L511,341.3 L510,344.2 L509,344.5 L508,355.7 L507,363.1 L506,374.4 L505,383.2 L504,395.9 L503,413.2 L502,422.7 L501,422.9 L500,421.0 L499,425.4 L498,426.7 L497,428.3 L496,428.7 L495,423.1 L494,421.0 L493,423.4 L492,417.9 L491,418.1 L490,415.8 L489,411.8 L488,411.1 L487,407.5 L486,405.5 L485,400.8 L484,400.5 L483,393.5 L482,390.8 L481,388.8 L480,389.7 L479,383.4 L478,381.1 L477,374.9 L476,369.7 L475,368.9 L474,366.5 L473,363.1 L472,360.5 L471,352.3 L470,351.9 L469,348.2 L468,342.1 L467,340.4 L466,338.8 L465,330.6 L464,328.8 L463,331.1 L462,323.8 L461,322.8 L460,320.1 L459,320.8 L458,322.2 L457,316.9 L456,320.8 L455,322.1 L454,329.0 L453,328.4 L452,329.7 L451,331.6 L450,335.2 L449,337.6 L448,343.9 L447,347.1 L446,359.8 L445,370.0 L444,376.0 L443,391.2 L442,404.9 L441,417.4 L440,420.5 L439,421.5 L438,424.7 L437,423.8 L436,423.9 L435,428.9 L434,425.8 L433,426.3 L432,424.2 L431,419.4 L430,419.7 L429,413.8 L428,414.7 L427,408.6 L426,407.9 L425,406.3 L424,401.1 L423,402.6 L422,398.0 L421,394.9 L420,393.8 L419,388.0 L418,386.0 L417,380.9 L416,378.7 L415,375.5 L414,370.7 L413,368.6 L412,361.0 L411,358.3 L410,358.2 L409,352.7 L408,349.8 L407,343.7 L406,341.8 L405,337.1 L404,333.0 L403,329.6 L402,329.0 L401,327.7 L400,327.0 L399,321.1 L398,320.5 L397,317.4 L396,317.8 L395,323.0 L394,321.2 L393,327.3 L392,325.4 L391,330.0 L390,333.0 L389,334.8 L388,336.0 L387,339.4 Z" fill="#f3dbcf"/>
<path d="M386.6,252.4 L387.0,251.9 L387.3,261.0 L387.7,264.0 L388.1,274.0 L388.4,277.6 L388.8,284.9 L389.2,262.2 L389.7,246.0 L390.1,241.3 L390.4,242.5 L390.8,236.1 L391.1,243.7 L391.5,236.2 L391.8,240.9 L392.2,235.2 L392.5,239.9 L392.9,232.9 L393.2,239.9 L393.6,232.2 L393.9,239.9 L394.3,232.0 L394.6,238.4 L395.0,235.8 L395.3,238.8 L395.7,235.8 L396.0,238.9 L396.4,236.8 L396.8,241.1 L397.1,234.4 L397.4,241.2 L397.8,234.6 L398.1,243.4 L398.5,238.3 L398.8,242.8 L399.2,237.7 L399.6,241.6 L399.9,236.2 L400.2,242.6 L400.6,238.1 L400.9,244.5 L401.3,237.2 L401.6,245.1 L402.0,239.8 L402.4,244.9 L402.7,241.1 L403.1,247.2 L403.4,238.7 L403.8,245.1 L404.1,242.6 L404.4,245.7 L404.8,242.0 L405.1,248.6 L405.5,240.5 L405.9,250.2 L406.2,246.8 L406.6,253.2 L407.0,247.7 L407.3,255.7 L407.7,250.2 L408.1,258.6 L408.5,260.1 L408.8,267.1 L409.2,265.6 L409.6,273.3 L410.0,275.3 L410.3,281.7 L410.7,284.5 L411.0,290.0 L411.4,294.3 L411.7,298.7 L412.1,303.0 L412.4,308.0 L412.8,312.6 L413.2,313.9 L413.6,314.8 L413.9,316.0 L414.3,316.2 L414.7,316.7 L415.1,316.2 L415.5,316.4 L415.8,316.1 L416.2,317.3 L416.6,317.6 L417.0,320.0 L417.3,320.7 L417.7,322.6 L418.1,323.4 L418.5,324.7 L418.8,325.1 L419.2,327.0 L419.6,327.5 L419.9,329.4 L420.3,330.5 L420.7,332.5 L421.0,333.1 L421.4,334.5 L421.8,334.7 L422.2,335.4 L422.5,335.8 L422.9,337.0 L423.3,337.4 L423.6,339.1 L424.0,340.1 L424.3,342.2 L424.7,343.2 L425.1,344.6 L425.4,345.3 L425.8,346.6 L426.1,346.8 L426.5,348.0 L426.9,348.8 L427.2,350.5 L427.6,351.1 L427.9,352.7 L428.3,353.1 L428.6,354.2 L429.0,354.2 L429.4,355.5 L429.7,355.7 L430.1,356.9 L430.4,357.8 L430.8,359.6 L431.2,362.4 L431.5,365.7 L431.9,367.7 L432.2,371.2 L432.6,372.4 L432.9,375.1 L433.3,377.0 L433.6,379.9 L434.0,381.9 L434.4,383.3 L434.8,383.8 L435.1,385.3 L435.5,385.4 L435.9,383.2 L436.2,379.9 L436.6,377.5 L436.9,375.0 L437.3,373.4 L437.6,370.9 L438.0,369.6 L438.4,368.7 L438.8,368.5 L439.1,366.7 L439.5,365.6 L439.9,363.5 L440.3,362.0 L440.7,359.9 L441.0,359.4 L441.4,357.8 L441.8,356.9 L442.2,353.5 L442.5,350.3 L442.9,346.1 L443.3,342.7 L443.6,338.8 L444.0,335.7 L444.4,331.9 L444.8,329.8 L445.1,326.3 L445.5,323.9 L445.9,320.6 L446.2,317.6 L446.6,313.2 L447.0,309.3 L447.4,304.4 L447.8,300.6 L448.1,296.0 L448.5,293.0 L448.9,288.4 L449.3,285.5 L449.7,280.7 L450.1,279.6 L450.4,273.9 L450.8,274.1 L451.1,268.0 L451.5,267.1 L451.8,260.4 L452.2,261.9 L452.5,255.9 L452.9,256.2 L453.3,250.3 L453.6,252.9 L454.0,248.2 L454.3,252.3 L454.7,246.0 L455.1,249.0 L455.4,243.1 L455.8,249.3 L456.2,240.4 L456.5,245.3 L456.9,238.7 L457.2,243.4 L457.6,236.4 L458.0,238.0 L458.3,229.6 L458.7,234.9 L459.1,224.7 L459.5,227.0 L459.8,218.2 L460.2,220.7 L460.6,219.0 L460.9,226.5 L461.3,222.5 L461.7,227.9 L462.0,227.1 L462.4,232.3 L462.8,228.6 L463.2,235.5 L463.6,235.2 L463.9,241.8 L464.3,238.8 L464.7,243.3 L465.1,241.3 L465.5,249.3 L465.9,247.4 L466.2,257.1 L466.6,256.8 L466.9,264.7 L467.3,263.3 L467.6,270.0 L468.0,272.6 L468.3,278.2 L468.7,280.2 L469.1,284.4 L469.4,286.6 L469.8,290.0 L470.1,292.6 L470.5,296.4 L470.9,298.7 L471.2,302.1 L471.6,304.4 L472.0,307.7 L472.3,310.1 L472.7,313.5 L473.0,315.8 L473.4,319.6 L473.8,320.6 L474.1,322.4 L474.4,322.6 L474.8,323.8 L475.1,323.9 L475.5,325.5 L475.8,326.0 L476.2,327.7 L476.5,329.1 L476.9,331.3 L477.2,332.4 L477.6,334.9 L477.9,335.4 L478.3,337.3 L478.6,337.4 L479.0,338.8 L479.3,339.5 L479.7,341.4 L480.1,342.0 L480.4,344.2 L480.8,345.4 L481.1,347.4 L481.5,348.1 L481.9,349.5 L482.2,350.2 L482.6,351.6 L482.9,352.5 L483.3,354.5 L483.6,356.4 L484.0,359.0 L484.4,360.1 L484.7,362.7 L485.1,363.4 L485.4,365.2 L485.8,365.4 L486.2,367.3 L486.5,368.0 L486.9,369.7 L487.2,370.8 L487.6,372.9 L488.0,373.6 L488.3,375.0 L488.7,375.0 L489.1,376.5 L489.5,376.8 L489.8,378.1 L490.2,378.8 L490.6,381.0 L490.9,382.0 L491.3,383.9 L491.7,384.8 L492.0,386.2 L492.4,386.5 L492.8,387.8 L493.2,387.5 L493.5,388.5 L493.9,389.1 L494.3,389.2 L494.6,388.5 L495.0,388.4 L495.3,387.8 L495.7,387.4 L496.0,386.3 L496.4,385.9 L496.7,385.0 L497.1,384.7 L497.5,383.0 L497.8,382.4 L498.2,380.5 L498.5,379.7 L498.9,377.4 L499.2,375.9 L499.6,373.2 L499.9,371.4 L500.3,368.6 L500.7,367.3 L501.1,365.2 L501.5,364.2 L501.9,362.8 L502.2,361.7 L502.6,359.8 L503.0,358.6 L503.4,356.3 L503.8,351.9 L504.1,347.2 L504.5,343.5 L504.8,338.8 L505.2,335.1 L505.5,330.3 L505.9,326.2 L506.2,320.7 L506.6,316.3 L507.0,310.3 L507.4,305.5 L507.8,300.4 L508.1,296.2 L508.5,292.0 L508.9,287.6 L509.3,282.0 L509.7,278.8 L510.1,274.7 L510.4,275.1 L510.8,272.0 L511.2,273.4 L511.5,267.4 L511.9,268.6 L512.3,264.6 L512.7,265.8 L513.0,260.2 L513.4,263.3 L513.8,256.0 L514.1,260.7 L514.5,253.4 L514.9,256.4 L515.2,246.8 L515.6,251.3 L515.9,242.3 L516.3,246.0 L516.6,236.1 L517.0,241.0 L517.4,239.7 L517.7,249.3 L518.1,248.5 L518.5,257.0 L518.8,255.4 L519.2,264.1 L519.6,257.0 L519.9,261.1 L520.3,255.0 L520.6,258.6 L521.0,249.9 L521.4,254.9 L521.7,247.9 L522.1,251.0 L522.5,244.3 L522.8,248.6 L523.2,241.4 L523.5,244.0 L523.9,237.1 L524.3,243.3 L524.6,240.1 L525.0,246.9 L525.3,240.3 L525.7,248.0 L526.0,243.8 L526.4,249.0 L526.7,246.4 L527.1,250.9 L527.5,248.6 L527.8,256.2 L528.2,254.4 L528.5,260.9 L528.9,257.7 L529.3,264.3 L529.6,260.6 L530.0,268.2 L530.4,266.0 L530.7,270.1 L531.1,268.1 L531.4,272.6 L531.8,273.3 L532.2,276.8 L532.5,276.1 L532.9,280.4 L533.3,279.4 L533.6,283.1 L534.0,282.9 L534.3,286.3 L534.7,286.9 L535.1,289.9 L535.4,291.4 L535.8,293.8 L536.1,294.8 L536.5,297.9 L536.8,299.9 L537.2,303.4 L537.5,305.2 L537.9,307.6 L538.2,308.1 L538.6,309.1 L539.0,309.1 L539.3,310.3 L539.6,310.4 L540.0,312.4 L540.4,313.0 L540.7,314.8 L541.0,315.5 L541.4,317.3 L541.8,317.6 L542.1,318.9 L542.5,319.1 L542.8,320.6 L543.2,321.6 L543.5,323.7 L543.9,324.4 L544.2,326.6 L544.6,327.0 L544.9,327.9 L545.3,327.2 L545.6,327.9 L546.0,326.8 L546.4,327.8 L546.7,327.5 L547.1,328.4 L547.5,328.9 L547.8,330.2 L548.2,330.4 L548.5,331.4 L548.9,331.6 L549.3,332.6 L549.6,332.7 L550.0,334.1 L550.3,334.5 L550.7,336.6 L551.1,337.5 L551.4,338.9 L551.8,339.2 L552.1,340.3 L552.5,340.1 L552.8,340.7 L553.2,340.9 L553.6,342.0 L553.9,342.2 L554.3,344.0 L554.6,344.9 L555.0,346.5 L555.4,347.2 L555.7,348.5 L556.1,348.8 L556.4,350.0 L556.8,350.0 L557.2,349.7 L557.5,348.4 L557.9,347.9 L558.3,347.0 L558.6,346.5 L559.0,344.8 L559.5,334.8 L560.0,324.4 L560.4,324.4 L560.7,323.6 L561.1,324.5 L561.4,324.3 L561.8,325.3 L562.2,325.8 L562.5,326.4 L562.9,325.9 L563.3,326.2 L563.6,325.4 L564.0,325.4 L564.3,325.2 L564.7,325.5 L565.1,322.5 L565.4,320.7 L565.8,317.5 L566.2,314.9 L566.6,311.3 L566.9,308.3 L567.3,304.7 L567.7,303.8 L568.0,301.6 L568.4,301.3 L568.8,299.8 L569.1,299.2 L569.5,297.8 L569.9,293.8 L570.3,290.1 L570.7,287.7 L571.0,283.2 L571.4,282.2 L571.8,277.1 L572.2,276.1 L572.6,269.3 L573.0,267.0 L573.4,255.5 L573.8,254.3 L574.2,244.0 L574.6,248.4 L574.9,241.8 L575.3,244.1 L575.6,236.6 L576.0,241.9 L576.3,234.1 L576.7,238.3 L577.0,233.6 L577.4,235.9 L577.8,231.2 L578.1,236.1 L578.5,228.8 L578.8,232.7 L579.2,227.5 L579.6,230.7 L579.9,224.6 L580.3,228.2 L580.7,223.8 L581.0,225.3 L581.4,219.1 L581.7,224.1 L582.1,219.2 L582.5,223.3 L582.8,220.5 L583.2,224.9 L583.5,222.8 L583.9,227.8 L584.2,223.1 L584.6,227.4 L584.9,223.2 L585.3,228.6 L585.7,223.0 L586.0,226.3 L586.4,218.6 L586.7,220.0 L587.1,211.1 L587.4,216.3 L587.8,208.5 L588.2,219.7 L588.6,221.5 L589.0,234.8 L589.4,235.6 L589.8,243.9 L590.2,240.1 L590.5,249.3 L590.9,247.1 L591.3,253.5 L591.7,252.0 L592.1,258.5 L592.4,256.2 L592.8,263.1 L593.2,259.9 L593.6,265.1 L593.9,263.8 L594.3,268.4 L594.6,266.9 L595.0,271.7 L595.4,270.1 L595.7,273.7 L596.1,272.4 L596.5,276.0 L596.8,275.1 L597.2,279.0 L597.5,278.4 L597.9,281.9 L598.2,281.3 L598.6,283.4 L599.0,283.3 L599.3,284.9 L599.6,284.5 L600.0,286.7 L600.4,286.6 L600.7,288.2 L601.0,288.5 L601.4,290.0 L601.8,290.4 L602.1,291.7 L602.5,292.3 L602.8,293.4 L603.2,294.1 L603.5,295.3 L603.9,296.1 L604.2,297.7 L604.6,298.4 L604.9,299.9 L605.3,299.6 L605.6,300.9 L606.0,300.4 L606.4,301.6 L606.7,302.4 L607.1,303.9 L607.4,305.1 L607.8,307.3 L608.2,308.3 L608.5,309.9 L608.9,310.3 L609.2,311.7 L609.6,311.9 L609.9,313.3 L610.3,313.7 L610.7,315.3 L611.0,316.2 L611.4,317.5 L611.7,317.9 L612.1,319.5 L612.5,319.4 L612.8,320.3 L613.2,321.0 L613.5,322.0 L613.9,323.2 L614.3,325.0 L614.6,326.3 L615.0,328.2 L615.3,329.4 L615.7,331.0 L616.0,331.5 L616.4,332.7 L616.8,332.7 L617.1,334.2 L617.5,334.7 L617.8,336.3 L618.2,337.0 L618.6,338.7 L618.9,339.5 L619.3,340.7 L619.6,340.6 L620.0,341.9 L620.4,337.6 L620.7,334.2 L621.1,329.9 L621.5,326.9 L621.8,323.4 L622.2,320.1 L622.6,320.7 L622.9,321.9 L623.3,321.8 L623.6,323.1 L624.0,323.2 L624.3,324.2 L624.7,324.6 L625.1,323.2 L625.4,320.4 L625.8,318.9 L626.2,316.4 L626.5,314.5 L626.9,311.3 L627.3,309.6 L627.7,306.7 L628.0,305.5 L628.4,303.1 L628.8,302.2 L629.1,299.9 L629.5,298.1 L629.9,292.7 L630.3,289.3 L630.7,284.4 L631.0,282.4 L631.4,276.6 L631.8,274.9 L632.2,268.6 L632.6,267.6 L633.0,259.7 L633.3,261.1 L633.7,254.4 L634.0,258.0 L634.4,248.1 L634.7,251.3 L635.1,243.8 L635.4,243.9 L635.8,237.8 L636.2,241.4 L636.5,236.4 L636.9,239.1 L637.2,234.7 L637.6,238.6 L638.0,230.9 L638.3,235.0 L638.7,230.5 L639.1,234.0 L639.4,227.8 L639.8,233.6 L640.1,226.2 L640.5,229.4 L640.9,222.7 L641.2,227.5 L641.6,222.5 L642.0,226.9 L642.4,220.3 L642.7,226.4 L643.1,219.2 L643.5,223.7 L643.8,218.2 L644.2,223.9 L644.6,217.7 L644.9,223.2 L645.3,215.0 L645.7,219.6 L646.1,215.7 L646.4,219.2 L646.8,214.7 L647.2,218.7 L647.5,216.9 L647.9,221.6 L648.2,217.8 L648.6,225.0 L648.9,222.4 L649.3,227.0 L649.6,223.6 L650.0,229.6 L650.4,227.8 L650.7,232.4 L651.1,232.3 L651.4,239.6 L651.8,233.5 L652.2,240.2 L652.5,237.5 L652.9,247.3 L653.3,241.9 L653.6,248.1 L654.0,246.1 L654.3,253.1 L654.7,251.1 L655.1,257.1 L655.4,255.7 L655.8,261.9 L656.2,257.9 L656.5,264.6 L656.9,261.4 L657.3,268.3 L657.7,267.1 L658.0,271.1 L658.4,271.3 L658.8,274.5 L659.1,274.4 L659.5,279.4 L659.9,278.3 L660.2,280.6 L660.6,280.3 L661.0,283.5 L661.4,282.4 L661.7,284.9 L662.1,284.9 L662.5,287.5 L662.8,287.3 L663.2,289.3 L663.6,290.0 L663.9,291.6 L664.3,292.2 L664.7,293.5 L665.1,294.5 L665.4,295.5 L665.8,295.6 L666.1,296.8 L666.5,297.5 L666.8,299.0 L667.2,299.8 L667.5,302.0 L667.9,302.7 L668.2,304.6 L668.6,304.6 L669.0,305.8 L669.3,305.7 L669.6,306.5 L670.0,306.8 L670.4,307.9 L670.7,308.6 L671.0,310.0 L671.4,310.7 L671.8,312.0 L672.1,312.0 L672.5,313.5 L672.8,314.4 L673.2,315.6 L673.5,316.5 L673.9,318.5 L674.3,319.9 L674.6,322.1 L675.0,322.8 L675.4,324.4 L675.7,324.3 L676.1,324.8 L676.5,324.3 L676.9,325.1 L677.2,324.9 L677.6,326.0 L678.0,326.5 L678.3,328.0 L678.7,328.1 L679.1,329.7 L679.4,329.7 L679.8,330.4 L680.2,330.5 L680.6,331.7 L680.9,332.1 L681.3,333.5 L681.7,331.8 L682.0,330.3 L682.4,328.0 L682.7,326.4 L683.1,323.0 L683.4,321.2 L683.8,317.7 L684.2,319.0 L684.5,318.9 L684.9,320.6 L685.2,321.3 L685.6,322.7 L685.9,323.1 L686.3,324.3 L686.6,324.5 L687.0,325.7 L687.4,320.8 L687.8,317.3 L688.1,313.0 L688.5,309.6 L688.9,305.2 L689.3,301.7 L689.7,297.3 L690.0,292.6 L690.4,287.9 L690.8,284.5 L691.2,280.0 L691.5,278.7 L691.9,273.4 L692.2,272.8 L692.6,266.8 L692.9,267.2 L693.3,260.4 L693.6,260.0 L694.0,254.4 L694.4,256.5 L694.8,246.6 L695.2,247.6 L695.5,239.1 L695.9,241.8 L696.3,235.6 L696.7,236.5 L697.1,228.7 L697.5,231.4 L697.8,224.0 L698.2,226.8 L698.5,220.3 L698.9,222.8 L699.2,217.0 L699.6,220.9 L700.0,215.6 L700.4,218.0 L700.7,213.4 L701.1,215.9 L701.5,208.3 L701.9,214.1 L702.3,206.7 L702.6,212.6 L703.0,206.6 L703.4,211.3 L703.8,203.9 L704.1,209.3 L704.5,204.7 L704.9,211.5 L705.2,208.3 L705.6,214.8 L706.0,208.1 L706.4,215.4 L706.7,210.9 L707.1,216.6 L707.5,212.4 L707.8,215.8 L708.2,212.5 L708.6,216.1 L709.0,212.5 L709.4,217.6 L709.8,214.3 L710.1,220.1 L710.5,214.7 L710.9,221.6 L711.3,214.8 L711.7,224.0 L712.0,219.2 L712.4,228.4 L712.7,222.3 L713.1,229.9 L713.4,226.9 L713.8,234.7 L714.1,231.1 L714.5,240.1 L714.9,235.6 L715.2,243.5 L715.6,242.6 L715.9,251.1 L716.3,245.9 L716.7,256.1 L717.0,254.6 L717.4,260.7 L717.8,259.9 L718.1,265.6 L718.5,263.8 L718.8,269.7 L719.2,269.4 L719.6,274.2 L719.9,272.6 L720.3,275.1 L720.7,274.2 L721.1,277.9 L721.4,276.0 L721.8,278.6 L722.2,278.7 L722.5,280.4 L722.9,279.7 L723.3,282.3 L723.6,282.0 L724.0,284.2 L724.4,283.8 L724.8,286.0 L725.1,286.2 L725.5,288.1 L725.9,288.3 L726.2,290.4 L726.6,291.0 L727.0,292.8 L727.4,293.9 L727.7,296.4 L728.1,297.6 L728.5,299.1 L728.8,299.3 L729.2,300.8 L729.6,301.1 L729.9,302.1 L730.3,302.8 L730.7,305.0 L731.1,306.2 L731.4,308.4 L731.8,309.6 L732.2,311.6 L732.5,312.3 L732.9,314.2 L733.2,314.7 L733.6,316.4 L733.9,317.8 L734.3,319.8 L734.6,321.0 L735.0,323.4 L735.4,323.3 L735.7,323.3 L736.1,322.7 L736.5,322.8 L736.9,322.1 L737.2,322.7 L737.6,322.8 L738.0,323.7 L738.3,324.2 L738.7,325.4 L739.1,325.7 L739.4,326.2 L739.8,325.6 L740.2,326.1 L740.6,326.2 L740.9,326.9 L741.3,327.0 L741.7,327.6 L742.0,327.5 L742.4,327.9 L742.7,327.3 L743.1,327.5 L743.5,326.3 L743.8,327.0 L744.2,326.5 L744.6,327.1 L744.9,327.1 L745.3,328.6 L745.6,328.4 L746.0,329.6 L746.4,327.8 L746.7,326.8 L747.1,325.0 L747.5,324.0 L747.8,321.8 L748.2,321.6 L748.6,319.7 L749.0,319.2 L749.3,317.5 L749.7,316.8 L750.1,314.5 L750.4,313.4 L750.8,311.3 L751.2,305.5 L751.6,299.2 L751.9,294.1 L752.3,287.6 L752.7,282.4 L753.1,273.7 L753.5,271.0 L753.8,261.8 L754.2,258.7 L754.6,249.3 L755.0,258.8 L755.4,262.0 L755.7,269.5 L756.1,273.2 L756.5,281.8 L756.9,294.7 L757.2,308.2 L757.6,321.1 L758.0,334.8 L758.3,348.5 L758.7,362.7 L759.1,363.9 L759.5,365.8 L759.9,366.4 L760.3,368.0 L760.7,358.5 L761.0,350.1 L761.4,340.2 L761.7,331.6 L762.1,322.7 L762.4,314.6 L762.8,305.4 L763.2,301.1 L763.5,295.4 L763.9,290.7 L764.3,284.4 L764.6,280.3 L765.0,273.5 L765.4,277.2 L765.7,275.4 L766.1,277.6 L766.4,277.2 L766.8,278.9 L767.2,278.4 L767.5,281.0 L767.9,280.0 L768.3,282.0 L768.6,281.5 L769.0,283.6 L769.3,282.4 L769.7,285.0 L770.1,283.3 L770.4,284.2 L770.8,281.6 L771.2,283.1 L771.5,281.4 L771.9,282.5 L772.3,279.5 L772.7,281.0 L773.0,279.4 L773.4,279.9 L773.8,277.9 L774.1,279.9 L774.5,276.7 L774.9,280.9 L775.3,280.5 L775.7,283.2 L776.0,283.3 L776.4,286.4 L776.8,286.9 L777.2,289.4 L777.6,290.3 L778.0,294.0 L778.3,297.6 L778.7,301.2 L779.0,304.2 L779.4,308.1 L779.7,311.4 L780.1,315.7 L780.4,319.1 L780.8,323.3 L781.2,323.6 L781.5,324.4 L781.9,323.7 L782.2,324.4 L782.6,323.9 L783.0,324.6 L783.3,324.5 L783.7,326.0 L784.0,326.9 L784.4,328.1 L784.8,328.9 L785.1,330.0 L785.5,330.1 L785.8,330.8 L786.2,330.6 L786.5,331.5 L786.9,331.6 L787.3,333.0 L787.6,333.2 L788.0,334.5 L788.3,334.5 L788.7,335.3 L789.1,334.7 L789.4,335.1 L789.8,334.4 L790.1,335.5 L790.5,335.7 L790.9,337.2 L791.2,337.4 L791.6,339.0 L791.9,339.4 L792.3,340.2 L792.7,339.7 L793.0,340.3 L793.4,340.3 L793.7,340.9 L794.1,340.8 L794.4,342.1 L794.8,342.2 L795.2,343.3 L795.5,343.0 L795.9,343.5 L796.2,343.1 L796.6,343.2 L797.0,343.6 L797.3,344.4 L797.7,345.2 L798.0,347.0 L798.4,347.8 L798.8,349.4 L799.1,349.4 L799.5,350.1 L799.9,350.1 L800.2,350.7 L800.6,350.2 L800.9,351.2 L801.3,351.8 L801.7,354.0 L802.0,355.2 L802.4,357.4 L802.7,358.1 L803.1,359.9 L803.4,360.7 L803.8,362.6 L804.1,363.6 L804.5,365.9 L804.9,365.8 L805.3,367.0 L805.7,367.1 L806.0,367.6 L806.4,367.0 L806.8,367.0 L807.2,365.8 L807.6,365.8 L808.0,362.2 L808.4,359.6 L808.7,356.0 L809.1,354.0 L809.5,350.2 L809.9,347.4 L810.3,343.7 L810.6,340.6 L811.0,337.0 L811.4,334.4 L811.8,330.5 L812.1,327.5 L812.5,323.2 L812.8,319.9 L813.2,315.1 L813.5,311.3 L813.9,306.3 L814.3,291.4 L814.7,274.6 L815.1,264.3 L815.5,244.4 L815.9,237.3 L816.3,217.2 L816.7,210.3 L817.1,193.7 L817.5,202.0 L817.8,198.9 L818.2,208.1 L818.5,206.8 L818.9,216.9 L819.2,214.9 L819.6,224.0 L820.0,207.5 L820.5,203.7 L820.9,188.5 L821.3,208.5 L821.7,216.3 L822.0,237.7 L822.4,245.8 L822.8,264.0 L823.2,272.7 L823.6,277.5 L824.0,278.3 L824.4,281.0 L824.8,281.4 L825.1,284.8 L825.5,285.8 L825.9,288.7 L826.3,290.1 L826.7,292.9 L827.1,296.0 L827.5,298.5 L827.9,299.8 L828.3,300.9 L828.6,301.2 L829.0,303.3 L829.3,304.0 L829.7,306.8 L830.0,308.3 L830.4,310.3 L830.7,311.5 L831.1,313.6 L831.5,315.5 L831.9,317.8 L832.3,319.6 L832.7,322.3 L833.0,324.6 L833.4,327.3 L833.8,329.3 L834.2,332.3 L834.6,332.4 L834.9,333.5 L835.3,333.8 L835.6,334.8 L836.0,335.6 L836.4,337.3 L836.7,338.5 L837.1,340.6 L837.5,341.8 L837.8,343.7 L838.2,344.5 L838.5,345.6 L838.9,345.9 L839.3,346.4 L839.6,345.7 L840.0,346.1 L840.3,345.7 L840.7,346.9 L841.0,346.3 L841.4,346.7 L841.7,346.2 L842.1,346.1 L842.5,345.7 L842.8,345.7 L843.2,345.6 L843.5,346.6 L843.9,346.8 L844.2,347.9 L844.6,348.3 L844.9,348.9 L845.3,348.1 L845.6,348.5 L846.0,347.7 L846.3,348.1 L846.7,347.3 L847.0,348.4 L847.4,348.0 L847.8,348.9 L848.1,348.9 L848.4,349.4 L848.8,348.6 L849.1,349.2 L849.5,348.7 L849.9,349.2 L850.2,349.3 L850.5,350.5 L850.9,350.7 L851.3,354.3 L851.7,356.5 L852.0,359.8 L852.4,361.6 L852.8,364.2 L853.2,366.0 L853.6,366.8 L853.9,367.4 L854.3,369.0 L854.6,369.4 L855.0,371.5 L855.4,372.1 L855.7,373.4 L856.1,373.6 L856.5,374.9 L856.8,375.1 L857.2,376.6 L857.5,377.3 L857.9,379.3 L858.3,380.6 L858.7,382.9 L859.1,383.4 L859.5,384.7 L859.8,384.5 L860.2,385.7 L860.6,386.0 L861.0,387.8 L861.4,387.3 L861.7,388.1 L862.1,387.8 L862.5,388.3 L862.8,387.6 L863.2,388.0 L863.6,387.2 L864.0,387.4 L864.3,386.9 L864.7,387.5 L865.1,387.4 L865.4,388.0 L865.8,387.5 L866.2,385.2 L866.6,381.3 L867.0,378.5 L867.3,374.6 L867.7,371.9 L868.1,369.0 L868.5,367.2 L868.9,364.2 L869.3,367.1 L869.7,368.8 L870.1,371.4 L870.5,372.6 L870.9,368.8 L871.2,364.4 L871.6,361.4 L871.9,357.2 L872.3,354.4 L872.6,349.9 L873.0,346.9 L873.3,342.2 L873.7,338.1 L874.1,328.9 L874.5,321.4 L874.9,312.8 L875.2,305.3 L875.6,297.7 L876.0,290.6 L876.4,282.0 L876.8,276.4 L877.2,271.8 L877.6,272.9 L878.0,269.3 L878.4,269.8 L878.8,261.9 L879.1,263.9 L879.5,255.8 L879.8,256.7 L880.2,247.1 L880.5,251.0 L880.9,242.4 L881.2,243.7 L881.6,234.6 L882.0,234.8 L882.4,225.6 L882.8,224.9 L883.2,215.8 L883.6,219.0 L884.0,214.6 L884.4,216.0 L884.8,210.2 L885.1,213.1 L885.5,209.2 L885.9,213.1 L886.3,206.5 L886.7,208.9 L887.1,203.5 L887.5,207.6 L887.9,200.9 L888.3,209.5 L888.6,206.5 L889.0,216.4 L889.4,216.5 L889.7,226.9 L890.1,224.3 L890.5,227.8 L890.8,222.7 L891.2,224.5 L891.5,217.9 L891.9,221.8 L892.2,214.6 L892.6,217.1 L893.0,210.3 L893.4,216.2 L893.8,209.0 L894.2,212.3 L894.6,208.3 L894.9,216.9 L895.3,212.4 L895.7,219.7 L896.0,213.1 L896.4,220.1 L896.8,219.1 L897.1,229.0 L897.5,230.3 L897.8,239.6 L898.2,238.2 L898.5,247.8 L898.9,246.8 L899.3,257.5 L899.6,254.9 L900.0,262.9 L900.3,264.4 L900.7,271.9 L901.0,273.6 L901.4,280.4 L901.7,282.6 L902.1,287.8 L902.5,287.9 L902.8,289.9 L903.2,290.5 L903.6,292.0 L904.0,292.8 L904.3,294.1 L904.7,296.1 L905.1,297.6 L905.4,298.0 L905.8,298.8 L906.2,298.7 L906.5,300.1 L906.9,300.4 L907.3,302.2 L907.7,303.6 L908.0,305.2 L908.4,306.1 L908.8,307.7 L909.1,308.7 L909.5,310.2 L909.8,310.6 L910.2,312.3 L910.6,313.4 L910.9,315.8 L911.3,316.7 L911.7,318.4 L912.0,319.0 L912.4,320.4 L912.7,320.5 L913.1,321.9 L913.5,322.0 L913.8,324.1 L914.2,325.2 L914.5,327.3 L914.9,328.7 L915.2,330.8 L915.6,331.9 L915.9,333.9 L916.3,334.8 L916.7,334.6 L917.0,333.8 L917.4,334.1 L917.7,333.3 L918.1,333.8 L918.4,333.2 L918.8,333.1 L919.1,332.3 L919.5,332.1 L919.9,332.2 L920.3,334.1 L920.7,334.9 L921.0,336.9 L921.4,338.8 L921.8,341.3 L922.2,342.9 L922.6,345.2 L923.0,345.6 L923.3,346.7 L923.7,346.8 L924.1,348.0 L924.4,348.3 L924.8,349.9 L925.2,350.2 L925.6,351.5 L925.9,352.1 L926.3,353.1 L926.7,353.0 L927.0,353.8 L927.4,353.9 L927.8,350.3 L928.1,346.2 L928.5,343.4 L928.8,339.7 L929.2,337.2 L929.5,333.0 L929.9,329.7 L930.3,329.0 L930.7,329.6 L931.0,328.9 L931.4,329.5 L931.8,329.6 L932.2,330.7 L932.6,330.8 L932.9,331.6 L933.3,331.2 L933.7,331.5 L934.1,323.6 L934.5,316.8 L934.9,309.0 L935.2,303.0 L935.6,295.9 L936.0,289.4 L936.4,280.8 L936.8,275.6 L937.2,270.0 L937.5,269.4 L937.9,262.1 L938.2,262.6 L938.6,254.0 L938.9,252.8 L939.3,246.5 L939.6,247.6 L940.0,235.7 L940.4,241.2 L940.8,234.4 L941.2,238.3 L941.5,231.1 L941.9,237.4 L942.3,231.4 L942.7,232.8 L943.1,227.1 L943.5,228.4 L943.8,220.3 L944.2,223.0 L944.5,216.1 L944.9,217.7 L945.2,209.5 L945.6,211.3 L945.9,203.8 L946.3,206.3 L946.7,196.1 L947.1,198.1 L947.5,188.8 L947.9,190.1 L948.3,182.3 L948.7,189.4 L949.1,186.5 L949.5,190.2 L949.8,185.1 L950.2,190.4 L950.6,186.2 L951.0,190.7 L951.4,188.0 L951.7,195.1 L952.1,190.2 L952.4,197.0 L952.8,193.4 L953.1,199.6 L953.5,195.5 L953.8,202.1 L954.2,194.4 L954.6,205.6 L954.9,201.0 L955.3,208.2 L955.6,206.6 L956.0,214.8 L956.3,210.9 L956.7,220.3 L957.0,217.3 L957.4,223.6 L957.8,221.3 L958.2,232.8 L958.6,231.2 L959.0,239.6 L959.3,241.3 L959.7,249.0 L960.1,247.5 L960.5,259.2 L960.9,256.8 L961.2,263.9 L961.6,262.4 L962.0,267.5 L962.3,265.3 L962.7,271.6 L963.1,270.7 L963.5,276.7 L963.8,277.3 L964.2,280.8 L964.6,281.8 L964.9,285.4 L965.3,286.8 L965.7,288.7 L966.0,289.2 L966.4,290.9 L966.7,291.8 L967.1,293.1 L967.4,294.0 L967.8,295.6 L968.1,296.5 L968.5,298.5 L968.8,299.1 L969.2,300.2 L969.5,300.8 L969.9,301.9 L970.2,302.6 L970.6,304.2 L970.9,305.2 L971.3,306.9 L971.6,307.6 L972.0,309.0 L972.3,309.3 L972.7,310.1 L973.0,310.1 L973.4,311.6 L973.8,312.1 L974.1,314.4 L974.5,315.3 L974.8,317.3 L975.1,318.7 L975.5,320.5 L975.9,321.0 L976.2,322.1 L976.5,322.2 L976.9,323.2 L977.2,323.8 L977.6,325.2 L978.0,325.7 L978.3,327.1 L978.7,327.5 L979.1,328.4 L979.4,328.5 L979.8,329.1 L980.2,329.3 L980.6,330.2 L980.9,330.6 L981.3,332.5 L981.7,333.2 L982.0,334.9 L982.4,335.5 L982.8,337.6 L983.1,338.1 L983.5,339.8 L983.8,340.2 L984.2,341.8 L984.5,342.6 L984.9,344.6 L985.2,346.1 L985.6,347.9 L985.9,349.3 L986.3,351.1 L986.6,351.9 L987.0,353.7 L987.3,354.5 L987.7,356.4 L988.1,353.1 L988.4,350.9 L988.8,347.7 L989.2,345.7 L989.6,342.3 L989.9,339.0 L990.3,335.0 L990.7,334.9 L991.0,333.7 L991.4,333.5 L991.7,332.6 L992.1,333.3 L992.5,332.8 L992.8,333.4 L993.2,332.6 L993.6,333.0 L993.9,332.1 L994.3,332.1 L994.6,331.2 L995.0,331.6 L995.4,325.5 L995.8,319.8 L996.2,313.4 L996.6,307.8 L997.0,301.6 L997.4,295.7 L997.8,289.6 L998.2,284.6 L998.5,278.1 L998.9,274.2 L999.3,264.9 L999.7,265.4 L1000.1,255.2 L1000.4,256.8 L1000.8,247.9 L1001.1,250.4 L1001.5,238.7 L1001.8,242.6 L1002.2,231.9 L1002.5,232.9 L1002.9,224.2 L1003.3,229.0 L1003.7,218.9 L1004.1,221.5 L1004.5,214.4 L1004.8,217.7 L1005.2,211.7 L1005.6,215.2 L1006.0,205.1 L1006.4,210.6 L1006.7,204.2 L1007.1,208.1 L1007.4,198.5 L1007.8,205.6 L1008.1,196.4 L1008.5,202.5 L1008.8,193.4 L1009.2,198.8 L1009.6,197.4 L1009.9,207.8 L1010.3,204.2 L1010.6,216.1 L1011.0,214.1 L1011.3,224.5 L1011.7,221.4 L1012.1,224.8 L1012.4,215.5 L1012.8,217.5 L1013.2,205.7 L1013.5,207.6 L1013.9,198.2 L1014.3,205.6 L1014.6,204.0 L1015.0,209.9 L1015.3,207.4 L1015.7,213.6 L1016.0,208.5 L1016.4,217.8 L1016.7,212.7 L1017.1,220.2 L1017.5,215.6 L1017.8,224.5 L1018.2,218.7 L1018.5,227.8 L1018.9,221.0 L1019.2,228.7 L1019.6,226.5 L1019.9,232.3 L1020.3,226.6 L1020.7,239.7 L1021.0,241.7 L1021.4,255.6 L1021.8,255.9 L1022.2,264.1 L1022.5,266.4 L1022.9,273.1 L1023.2,276.7 L1023.6,282.9 L1023.9,285.8 L1024.3,291.1 L1024.6,295.4 L1025.0,300.2 L1025.4,301.8 L1025.7,303.9 L1026.1,305.2 L1026.4,308.0 L1026.8,310.0 L1027.2,312.9 L1027.5,315.5 L1027.9,318.7 L1028.3,320.7 L1028.6,323.4 L1029.0,324.5 L1029.3,326.7 L1029.7,327.9 L1030.1,329.6 L1030.4,330.7 L1030.8,333.0 L1031.2,334.7 L1031.6,337.2 L1031.9,338.2 L1032.3,340.1 L1032.7,340.9 L1033.0,343.1 L1033.4,343.9 L1033.8,346.4 L1034.1,348.1 L1034.5,351.1 L1034.9,352.5 L1035.3,355.2 L1035.6,356.2 L1036.0,358.0 L1036.4,357.7 L1036.7,358.1 L1037.1,358.2 L1037.5,358.9 L1037.8,359.2 L1038.2,361.0 L1038.6,361.4 L1039.0,362.8 L1039.3,363.2 L1039.7,364.0 L1040.1,364.2 L1040.4,365.6 L1040.8,365.8 L1041.2,367.3 L1041.5,367.9 L1041.9,369.9 L1042.2,370.1 L1042.6,371.1 L1043.0,371.1 L1043.3,371.7 L1043.7,371.1 L1044.1,372.1 L1044.4,372.1 L1044.8,373.7 L1045.1,374.3 L1045.5,375.9 L1045.9,376.4 L1046.2,378.0 L1046.6,378.0 L1047.0,378.9 L1047.3,378.8 L1047.7,380.1 L1048.1,380.5 L1048.5,382.4 L1048.8,382.8 L1049.2,384.2 L1049.6,384.3 L1049.9,385.4 L1050.3,384.8 L1050.7,381.7 L1051.1,377.7 L1051.5,374.7 L1051.8,371.5 L1052.2,369.5 L1052.6,366.0 L1053.0,363.7 L1053.4,360.3 L1053.8,358.3 L1054.1,355.3 L1054.5,352.9 L1054.8,349.8 L1055.2,348.1 L1055.5,345.5 L1055.9,343.8 L1056.2,340.9 L1056.6,338.8 L1057.0,329.2 L1057.4,320.6 L1057.8,310.6 L1058.2,302.3 L1058.5,294.4 L1058.9,286.2 L1059.3,275.3 L1059.7,270.4 L1060.1,263.8 L1060.4,264.9 L1060.8,260.0 L1061.2,261.1 L1061.5,252.9 L1061.9,257.3 L1062.3,249.3 L1062.7,250.4 L1063.0,243.8 L1063.4,248.2 L1063.8,240.2 L1064.1,242.8 L1064.5,235.3 L1064.9,236.5 L1065.3,231.0 L1065.7,231.7 L1066.0,225.1 L1066.4,229.4 L1066.8,218.3 L1067.2,221.8 L1067.6,215.9 L1068.0,219.9 L1068.3,211.7 L1068.7,213.1 L1069.0,206.3 L1069.4,207.8 L1069.7,202.4 L1070.1,204.3 L1070.4,197.4 L1070.8,201.8 L1071.2,196.9 L1071.6,201.8 L1072.0,197.4 L1072.3,205.4 L1072.7,200.4 L1073.1,208.8 L1073.5,203.3 L1073.9,210.4 L1074.3,205.4 L1074.6,208.9 L1075.0,201.1 L1075.4,205.0 L1075.7,197.2 L1076.1,202.5 L1076.5,204.6 L1076.9,216.3 L1077.2,217.4 L1077.6,232.0 L1078.0,234.9 L1078.4,237.9 L1078.8,230.8 L1079.2,234.2 L1079.5,227.4 L1079.9,230.2 L1080.3,221.3 L1080.7,230.7 L1081.1,228.6 L1081.5,239.1 L1081.8,239.8 L1082.2,247.0 L1082.6,247.4 L1083.0,257.8 L1083.4,256.2 L1083.8,262.7 L1084.1,260.1 L1084.5,265.6 L1084.8,265.4 L1085.2,270.5 L1085.6,268.2 L1085.9,274.1 L1086.3,272.9 L1086.7,277.9 L1087.0,277.5 L1087.4,281.7 L1087.7,281.2 L1088.1,284.7 L1088.5,285.3 L1088.8,288.0 L1089.2,288.6 L1089.5,290.7 L1089.9,291.8 L1090.2,293.8 L1090.6,293.9 L1090.9,296.4 L1091.3,297.7 L1091.7,300.2 L1092.0,301.7 L1092.4,303.5 L1092.7,304.7 L1093.1,306.5 L1093.4,307.3 L1093.8,309.8 L1094.1,311.0 L1094.5,313.4 L1094.9,314.3 L1095.2,315.9 L1095.6,316.3 L1096.0,317.7 L1096.4,317.4 L1096.7,318.4 L1097.1,318.8 L1097.5,320.7 L1097.8,321.6 L1098.2,323.9 L1098.6,324.7 L1098.9,327.0 L1099.3,327.4 L1099.7,329.1 L1100.1,329.2 L1100.4,330.6 L1100.8,331.3 L1101.2,332.6 L1101.5,332.6 L1101.9,333.8 L1102.2,334.2 L1102.6,334.8 L1103.0,334.1 L1103.3,334.6 L1103.7,334.4 L1104.1,334.8 L1104.4,335.2 L1104.8,336.4 L1105.1,336.7 L1105.5,338.6 L1105.9,340.4 L1106.2,343.1 L1106.6,344.5 L1106.9,346.6 L1107.3,347.6 L1107.6,349.4 L1108.0,350.9 L1108.3,353.3 L1108.7,355.2 L1109.1,354.8 L1109.4,353.7 L1109.8,353.2 L1110.2,351.3 L1110.5,350.5 L1110.9,349.0 L1111.2,348.6 L1111.6,347.9 L1112.0,348.1 L1112.3,347.5 L1112.7,347.6 L1113.1,346.6 L1113.4,346.2 L1113.8,344.6 L1114.2,346.2 L1114.5,346.9 L1114.9,349.0 L1115.2,349.9 L1115.6,351.8 L1115.9,353.2 L1116.3,355.3 L1116.7,351.6 L1117.0,348.5 L1117.4,344.5 L1117.7,341.2 L1118.1,337.0 L1118.4,334.5 L1118.8,331.0 L1119.2,325.8 L1119.6,319.5 L1119.9,314.0 L1120.3,307.1 L1120.7,301.4 L1121.1,293.6 L1121.5,288.1 L1121.8,280.4 L1122.2,276.7 L1122.6,267.7 L1123.0,266.1 L1123.3,259.2 L1123.7,258.4 L1124.1,249.0 L1124.5,251.6 L1124.8,241.5 L1125.2,242.1 L1125.6,240.5 L1125.9,246.6 L1126.3,244.4 L1126.7,250.0 L1127.0,247.0 L1127.4,255.2 L1127.8,245.4 L1128.1,244.7 L1128.5,235.0 L1128.9,235.3 L1129.2,227.1 L1129.6,227.1 L1130.0,225.3 L1130.3,237.6 L1130.7,234.2 L1131.0,246.6 L1131.4,242.6 L1131.7,254.7 L1132.1,252.8 L1132.5,251.7 L1132.8,243.8 L1133.2,241.2 L1133.5,231.0 L1133.9,233.4 L1134.2,221.5 L1134.6,221.3 L1135.0,219.1 L1135.4,224.4 L1135.7,221.5 L1136.1,230.9 L1136.5,226.1 L1136.9,230.9 L1137.3,230.1 L1137.6,235.5 L1138.0,230.9 L1138.4,240.6 L1138.8,235.7 L1139.1,240.9 L1139.5,239.7 L1139.8,243.9 L1140.2,240.2 L1140.5,247.9 L1140.9,242.2 L1141.2,252.3 L1141.6,245.7 L1142.0,254.4 L1142.4,250.7 L1142.8,257.8 L1143.2,257.9 L1143.5,263.5 L1143.9,261.8 L1144.3,267.1 L1144.7,267.3 L1145.1,270.9 L1145.4,270.2 L1145.8,275.8 L1146.2,274.4 L1146.5,279.8 L1146.9,279.3 L1147.3,283.0 L1147.7,283.4 L1148.0,286.7 L1148.4,287.2 L1148.8,290.0 L1149.1,291.7 L1149.5,293.7 L1149.9,293.9 L1150.2,296.1 L1150.6,297.9 L1150.9,300.6 L1151.3,302.1 L1151.7,304.9 L1152.0,306.6 L1152.4,308.7 L1152.8,309.4 L1153.1,311.0 L1153.5,312.2 L1153.8,314.3 L1154.2,315.3 L1154.6,317.8 L1154.9,319.1 L1155.3,321.2 L1155.7,322.4 L1156.1,324.3 L1156.4,324.8 L1156.8,326.5 L1157.2,327.8 L1157.5,330.1 L1157.9,332.2 L1158.3,334.8 L1158.6,336.5 L1159.0,339.0 L1159.4,339.9 L1159.8,341.8 L1160.1,342.7 L1160.5,344.4 L1160.9,344.5 L1161.2,345.5 L1161.6,346.0 L1162.0,347.5 L1162.4,347.6 L1162.7,348.7 L1163.1,348.7 L1163.5,349.8 L1163.8,349.8 L1164.2,350.8 L1164.6,351.4 L1164.9,353.5 L1165.3,354.5 L1165.7,355.8 L1166.1,356.1 L1166.4,357.3 L1166.8,357.2 L1167.2,358.0 L1167.5,357.4 L1167.9,358.6 L1168.3,358.7 L1168.6,360.0 L1169.0,360.9 L1169.4,362.4 L1169.8,362.2 L1170.1,363.2 L1170.5,363.7 L1170.9,364.4 L1171.2,364.6 L1171.6,366.2 L1172.0,367.0 L1172.3,369.2 L1172.7,369.6 L1173.0,371.4 L1173.4,371.4 L1173.7,372.0 L1174.1,372.2 L1174.4,372.9 L1174.8,372.9 L1175.1,374.2 L1175.5,374.3 L1175.8,376.0 L1176.2,376.7 L1176.5,378.2 L1176.9,378.8 L1177.3,376.7 L1177.6,373.8 L1178.0,372.3 L1178.4,369.2 L1178.8,367.7 L1179.1,365.4 L1179.5,364.3 L1179.9,354.7 L1180.3,346.2 L1180.7,336.1 L1181.0,326.9 L1181.4,316.5 L1181.8,307.5 L1182.2,298.4 L1182.6,290.8 L1183.0,285.4 L1183.3,281.8 L1183.7,275.9 L1184.1,273.4 L1184.4,266.2 L1184.8,264.9 L1185.2,248.7 L1185.6,245.1 L1185.9,231.4 L1186.3,226.2 L1186.7,211.6 L1187.1,220.6 L1187.4,221.9 L1187.8,232.6 L1188.2,230.3 L1188.5,240.4 L1188.9,242.0 L1189.3,242.7 L1189.6,231.1 L1190.0,234.9 L1190.4,225.6 L1190.8,225.1 L1191.1,216.8 L1191.5,218.3 L1191.9,217.6 L1192.3,226.5 L1192.7,223.3 L1193.0,235.8 L1193.4,235.5 L1193.8,242.0 L1194.2,243.8 L1194.6,252.9 L1195.0,243.6 L1195.3,246.7 L1195.7,238.5 L1196.0,240.6 L1196.4,232.3 L1196.7,235.9 L1197.1,225.6 L1197.4,230.5 L1197.8,220.4 L1198.2,233.7 L1198.5,230.8 L1198.9,243.5 L1199.3,244.3 L1199.6,253.8 L1200.0,252.4 L1200.4,255.7 L1200.8,247.1 L1201.2,250.2 L1201.5,242.0 L1201.9,246.4 L1202.3,238.1 L1202.7,241.0 L1203.1,234.8 L1203.5,241.8 L1203.8,240.4 L1204.2,246.5 L1204.5,245.6 L1204.9,255.2 L1205.2,250.7 L1205.6,260.1 L1205.9,256.4 L1206.3,265.0 L1206.7,262.6 L1207.0,271.0 L1207.4,271.3 L1207.7,276.5 L1208.1,278.3 L1208.5,282.8 L1208.8,285.5 L1209.2,289.8 L1209.6,292.5 L1209.9,295.4 L1210.3,298.5 L1210.6,303.1 L1211.0,306.2 L1211.4,309.2 L1211.7,310.4 L1212.1,312.4 L1212.4,313.2 L1212.8,314.8 L1213.1,315.4 L1213.5,317.0 L1213.8,317.9 L1214.2,320.3 L1214.6,321.5 L1214.9,323.7 L1215.3,324.9 L1215.6,327.1 L1216.0,327.8 L1216.3,329.8 L1216.7,330.6 L1217.0,332.9 L1217.4,333.9 L1217.8,336.2 L1218.1,337.9 L1218.5,339.9 L1218.9,340.7 L1219.3,342.3 L1219.6,342.9 L1220.0,344.1 L1220.4,343.9 L1220.7,345.5 L1221.1,346.5 L1221.5,348.6 L1221.8,349.6 L1222.2,352.0 L1222.6,352.7 L1223.0,354.5 L1223.3,355.4 L1223.7,356.6 L1224.1,357.1 L1224.4,358.7 L1224.8,359.7 L1225.2,361.7 L1225.6,362.1 L1225.9,363.8 L1226.3,363.8 L1226.7,364.8 L1227.0,364.5 L1227.4,365.3 L1227.8,365.8 L1228.1,366.8 L1228.5,368.1 L1228.9,369.7 L1229.3,370.8 L1229.6,372.2 L1230.0,372.8 L1230.4,374.4 L1230.7,374.3 L1231.1,375.6 L1231.4,376.1 L1231.8,377.8 L1232.2,378.9 L1232.5,380.3 L1232.9,381.0 L1233.3,382.3 L1233.6,382.2 L1234.0,383.2 L1234.3,383.2 L1234.7,384.4 L1235.1,384.8 L1235.4,386.8 L1235.8,387.9 L1236.2,389.9 L1236.6,390.8 L1236.9,392.5 L1237.3,392.5 L1237.7,394.0 L1238.1,394.2 L1238.4,395.3 L1238.8,396.3 L1239.2,395.0 L1239.6,392.6 L1239.9,391.0 L1240.3,388.1 L1240.7,386.2 L1241.1,383.2 L1241.5,380.9 L1241.8,378.6 L1242.2,377.3 L1242.6,375.1 L1243.0,365.4 L1243.3,354.5 L1243.7,344.4 L1244.0,333.5 L1244.4,322.5 L1244.7,310.8 L1245.1,300.1 L1245.5,284.0 L1245.9,271.2 L1246.2,251.9 L1246.6,241.4 L1247.0,221.3 L1247.4,210.0" fill="none" stroke="#d35f24" stroke-width="1.2" stroke-linejoin="round"/>
<rect x="386" y="106" width="1.4" height="333" fill="#d35f24"/>
<rect x="387" y="439" width="861" height="1" fill="#ccd6eb"/>
</svg>
<div class="yl" style="left:342px;top:127.7px">110</div>
<div class="yl" style="left:342px;top:188.7px">100</div>
<div class="yl" style="left:342px;top:249.7px">90</div>
<div class="yl" style="left:342px;top:310.7px">80</div>
<div class="yl" style="left:342px;top:371.7px">70</div>
<div class="a" style="left:470px;top:439px;width:1px;height:4px;background:#ccd6eb"></div>
<div class="xl" style="left:442px;top:448.8px">10. Jun</div>
<div class="a" style="left:593px;top:439px;width:1px;height:4px;background:#ccd6eb"></div>
<div class="xl" style="left:565px;top:448.8px">12. Jun</div>
<div class="a" style="left:716px;top:439px;width:1px;height:4px;background:#ccd6eb"></div>
<div class="xl" style="left:688px;top:448.8px">14. Jun</div>
<div class="a" style="left:839px;top:439px;width:1px;height:4px;background:#ccd6eb"></div>
<div class="xl" style="left:811px;top:448.8px">16. Jun</div>
<div class="a" style="left:962px;top:439px;width:1px;height:4px;background:#ccd6eb"></div>
<div class="xl" style="left:934px;top:448.8px">18. Jun</div>
<div class="a" style="left:1085px;top:439px;width:1px;height:4px;background:#ccd6eb"></div>
<div class="xl" style="left:1057px;top:448.8px">20. Jun</div>
<div class="a" style="left:1208px;top:439px;width:1px;height:4px;background:#ccd6eb"></div>
<div class="xl" style="left:1180px;top:448.8px">22. Jun</div>
<svg class="a" style="left:368px;top:467px" width="12" height="15" viewBox="0 0 12 15"><path d="M6 1 V9" stroke="#007960" stroke-width="2.6"/><path d="M1 7.5 H11 L6 14 Z" fill="#007960"/></svg>
<div class="a g" style="left:387px;top:468.8px;font-size:12px;letter-spacing:-0.65px">8/6/2022 3:02 PM</div>
<div class="a g" style="left:477px;top:468.8px;font-size:12px;letter-spacing:-1.2px;text-decoration:underline">PDT</div>
<svg class="a" style="left:690px;top:468px" width="192" height="14" viewBox="0 0 192 14">
 <path d="M0.5 7 L7.5 0.5 V13.5 Z M7.5 7 L14.5 0.5 V13.5 Z" fill="#007960"/>
 <path d="M30 7 L37 0.5 V13.5 Z" fill="#007960"/>
 <path d="M103.5 0.5 L110.5 7 L103.5 13.5 Z" fill="#007960"/>
 <path d="M126 0.5 L133 7 L126 13.5 Z M133 0.5 L140 7 L133 13.5 Z" fill="#007960"/>
 <path d="M154 0.5 L161 7 L154 13.5 Z" fill="#007960"/><rect x="161" y="0.5" width="2.4" height="13" fill="#007960"/>
 <path d="M188 5 A4.3 4.3 0 0 0 180.5 4 M180 9 A4.3 4.3 0 0 0 187.5 10" stroke="#007960" stroke-width="1.8" fill="none"/>
 <path d="M189.5 2 V6 H185.5 Z M178.5 12 V8 H182.5 Z" fill="#007960"/>
</svg>
<div class="a g" style="left:742px;top:468.8px;font-size:12px;letter-spacing:-0.7px">14 days</div>
<div class="a g" style="left:1132px;top:468.8px;font-size:12px;letter-spacing:-0.65px">22/6/2022 3:02 PM</div>
<div class="a g" style="left:1228px;top:468.8px;font-size:12px;letter-spacing:-1.2px;text-decoration:underline">PDT</div>
<div class="a" style="left:361px;top:488px;width:899px;height:62px;background:#f5f5f5;border-top:1px solid #e3e6ec"></div>
<div class="a" style="left:386px;top:498px;width:702px;height:14px;background:#f8f8f8;border:2px solid #c8c8c8;border-right:none;border-radius:4px 0 0 4px"></div>
<div class="a" style="left:1088px;top:497.5px;width:140px;height:15px;background:#fff;border-top:2.2px solid #007960;border-bottom:2.2px solid #007960"></div>
<div class="a" style="left:1084.5px;top:496px;width:5px;height:18px;background:#9fcbbd;border:1.4px solid #007960;border-radius:0"></div>
<div class="a" style="left:1226.5px;top:496px;width:5px;height:18px;background:#9fcbbd;border:1.4px solid #007960;border-radius:0"></div>
<svg class="a" style="left:1233px;top:498px" width="13" height="14" viewBox="0 0 13 14">
 <rect x="0" y="0" width="5.6" height="14" fill="#007960"/><rect x="6.4" y="0" width="5.6" height="14" fill="#007960"/>
 <path d="M0.5 13 L2.8 2.5 L5 13 M6.9 13 L9.2 2.5 L11.5 13" stroke="#d8ece6" stroke-width="1.2" fill="none"/>
</svg>
<div class="a" style="left:495.5px;top:512px;width:1px;height:3px;background:#ccd6eb"></div>
<div class="sl" style="left:466.0px;top:517.5px">4. Apr</div>
<div class="a" style="left:620.1px;top:512px;width:1px;height:3px;background:#ccd6eb"></div>
<div class="sl" style="left:590.6px;top:517.5px">18. Apr</div>
<div class="a" style="left:744.7px;top:512px;width:1px;height:3px;background:#ccd6eb"></div>
<div class="sl" style="left:715.2px;top:517.5px">2. May</div>
<div class="a" style="left:869.3px;top:512px;width:1px;height:3px;background:#ccd6eb"></div>
<div class="sl" style="left:839.8px;top:517.5px">16. May</div>
<div class="a" style="left:993.9px;top:512px;width:1px;height:3px;background:#ccd6eb"></div>
<div class="sl" style="left:964.4px;top:517.5px">30. May</div>
<div class="a" style="left:1118.5px;top:512px;width:1px;height:3px;background:#ccd6eb"></div>
<div class="sl" style="left:1089.0px;top:517.5px">13. Jun</div>
<svg class="a" style="left:368px;top:532px" width="12" height="15" viewBox="0 0 12 15"><path d="M6 14.5 V6" stroke="#007960" stroke-width="2.6"/><path d="M1 7.5 H11 L6 1 Z" fill="#007960"/></svg>
<div class="a g" style="left:387px;top:534.8px;font-size:12px;letter-spacing:-0.45px">24/3/2022</div>
<div class="a g" style="left:793px;top:534.5px;font-size:12px;letter-spacing:-0.4px">3 months</div>
<div class="a g" style="left:1195px;top:534.8px;font-size:12px;letter-spacing:-0.45px">22/6/2022</div>
<div class="a" style="left:361px;top:550px;width:899px;height:26px;background:#007960"></div>
<svg class="a" style="left:370px;top:556px" width="16" height="13" viewBox="0 0 16 13">
 <path d="M1 0.5 V12 H15.5" stroke="#fff" stroke-width="1.4" fill="none"/>
 <path d="M2.5 10.5 V6 L5 2.5 L8 6 L10.5 3.5 L14 7 V10.5 Z" fill="#fff"/>
</svg>
<div class="a" style="left:391px;top:556.5px;font-size:12.5px;font-weight:700;color:#fff;letter-spacing:-0.6px">Details</div>
<div class="a" style="left:1174.5px;top:552.5px;width:82px;height:21px;background:#fff;border-radius:3px"></div>
<svg class="a" style="left:1179px;top:556px" width="16" height="15" viewBox="0 0 16 15">
 <circle cx="6" cy="8" r="3" fill="none" stroke="#333" stroke-width="2.6"/>
 <circle cx="6" cy="8" r="4.6" fill="none" stroke="#333" stroke-width="1.6" stroke-dasharray="1.6 1.3"/>
 <circle cx="12.5" cy="3" r="1.7" fill="none" stroke="#333" stroke-width="1.2"/>
 <circle cx="12.5" cy="3" r="2.5" fill="none" stroke="#333" stroke-width="1" stroke-dasharray="1 1"/>
 <circle cx="12.5" cy="11.5" r="1.7" fill="none" stroke="#333" stroke-width="1.2"/>
 <circle cx="12.5" cy="11.5" r="2.5" fill="none" stroke="#333" stroke-width="1" stroke-dasharray="1 1"/>
</svg>
<div class="a" style="left:1199px;top:557px;font-size:12px;color:#333;letter-spacing:-0.6px">Customize</div>
<!-- table header -->
<svg class="a" style="left:378px;top:585px" width="14" height="13" viewBox="0 0 14 13"><path d="M13 0.5 C9 0.5 6 3 4.5 6 L2 6 L0.5 8 L4 8.5 L5.5 10.5 L6 12.5 L8 11 L8 8.5 C11 7 13 4 13 0.5 Z M3 9.5 L1 12" fill="#007960" stroke="#007960" stroke-width="0.6"/></svg>
<svg class="a" style="left:423px;top:586px" width="11" height="11" viewBox="0 0 11 11"><path d="M2 2 L9 9 M9 2 L2 9" stroke="#555" stroke-width="2.8" stroke-linecap="round"/></svg>
<div class="cb" style="left:444px;top:586px"></div>
<svg class="a" style="left:490px;top:585px" width="10" height="13" viewBox="0 0 10 13"><path d="M1 5 L5 1 L9 5 Z M1 8 L5 12 L9 8 Z" fill="#666"/></svg>
<div class="a" style="left:506px;top:586.4px;font-size:12px;font-weight:700;color:#1c2636;letter-spacing:0px">Name</div>
<svg class="a" style="left:543px;top:585px" width="10" height="13" viewBox="0 0 10 13"><path d="M1 5 L5 1 L9 5 Z M1 8 L5 12 L9 8 Z" fill="#666"/></svg>
<div class="a" style="left:1078px;top:586.5px;font-size:12px;font-weight:700;color:#1c2636;letter-spacing:-0.35px">Assets</div>
<svg class="a" style="left:1118px;top:585px" width="10" height="13" viewBox="0 0 10 13"><path d="M1 5 L5 1 L9 5 Z M1 8 L5 12 L9 8 Z" fill="#666"/></svg>
<div class="a" style="left:1133px;top:586.5px;font-size:12px;font-weight:700;color:#007960;letter-spacing:-0.1px">Lane</div>
<svg class="a" style="left:1164px;top:585px" width="10" height="6" viewBox="0 0 10 6"><path d="M1 5 L5 1 L9 5 Z" fill="#007960"/></svg>
<svg class="a" style="left:1228px;top:581px" width="19" height="15" viewBox="0 0 19 15">
 <rect x="0.5" y="0.5" width="15" height="11" fill="#fff" stroke="#aaa" stroke-width="1"/>
 <rect x="10" y="0.5" width="5.5" height="11" fill="#bbb"/>
 <path d="M0.5 4 H15.5 M0.5 7.8 H15.5 M5 0.5 V11.5" stroke="#aaa" stroke-width="0.9"/>
 <circle cx="15" cy="11" r="3.3" fill="#444"/><path d="M15 9 V13 M13 11 H17" stroke="#fff" stroke-width="1"/>
</svg>
<div class="a" style="left:361px;top:604px;width:899px;height:2px;background:#e6e6e6"></div>
<div class="a" style="left:361px;top:606px;width:899px;height:22px;background:#f8f8f8"></div>
<svg class="a" style="left:378px;top:610px" width="14" height="13" viewBox="0 0 14 13"><path d="M13 0.5 C9 0.5 6 3 4.5 6 L2 6 L0.5 8 L4 8.5 L5.5 10.5 L6 12.5 L8 11 L8 8.5 C11 7 13 4 13 0.5 Z M3 9.5 L1 12" fill="#007960" stroke="#007960" stroke-width="0.6"/></svg>
<svg class="a" style="left:403px;top:610px" width="13" height="13" viewBox="0 0 13 13"><circle cx="6.5" cy="6.5" r="6" fill="#007960"/><rect x="5.6" y="5.5" width="1.9" height="4.8" fill="#fff"/><circle cx="6.5" cy="3.6" r="1.1" fill="#fff"/></svg>
<svg class="a" style="left:423px;top:611px" width="11" height="11" viewBox="0 0 11 11"><path d="M2 2 L9 9 M9 2 L2 9" stroke="#007960" stroke-width="2.8" stroke-linecap="round"/></svg>
<div class="cb" style="left:444px;top:611px"></div>
<svg class="a" style="left:462px;top:608px" width="16" height="14" viewBox="0 0 16 14"><path d="M1 9 L4.5 2 L8 10 L10.5 5.5 L13 12 L15 9" stroke="#d35f24" stroke-width="1.6" fill="none"/></svg>
<div class="a" style="left:486.5px;top:611.5px;font-size:12px;color:#333;letter-spacing:-0.5px">°F</div>
<div class="a" style="left:506px;top:611px;font-size:12.5px;font-weight:700;color:#333;letter-spacing:-0.05px">Temperature</div>
<div class="a g" style="left:1078px;top:611.2px;font-size:12px;letter-spacing:-0.3px;text-decoration:underline">Area A</div>
<div class="a" style="left:1167px;top:611.2px;font-size:12px;color:#333">1</div>
<!-- cursor -->
<svg class="a" style="left:576px;top:620px" width="40" height="48" viewBox="0 0 40 48">
 <path d="M13 24 V5.5 C13 2.5 18.5 2.5 18.5 5.5 V15 C18.5 13.5 23.5 13.5 23.5 15 V17 C23.5 15.5 28.5 15.5 28.5 17 V18.5 C28.5 17 34 17 34 19 V33 C34 40 30 44.5 23 44.5 C17 44.5 14 41 9 35.5 L3.5 29 C2 27 4 24 6.5 25 Z" fill="#fff" stroke="#000" stroke-width="2.4" stroke-linejoin="round"/>
 <path d="M18.5 15 V25 M23.5 17 V25 M28.5 18.5 V25" stroke="#000" stroke-width="2"/>
</svg>
<div class="a" style="left:934px;top:48px;width:312px;height:140px;background:#efac4f;border-radius:3px;box-shadow:0 0 2px rgba(0,0,0,0.15)"></div>
<div class="a" style="left:934px;top:184px;width:192px;height:4px;background:#fce4c6;border-radius:0 0 0 3px"></div>
<div class="a" style="left:948px;top:62.5px;font-size:12.2px;font-weight:700;color:#fff;letter-spacing:-0.42px;line-height:18.4px;white-space:pre">Boundaries for Temperature have been converted
to metrics. Add these metrics to the display to
recover the shaded region if Temperature is
removed.</div>
<svg class="a" style="left:1224px;top:59px" width="13" height="13" viewBox="0 0 13 13"><path d="M1.5 1.5 L11.5 11.5 M11.5 1.5 L1.5 11.5" stroke="#fdf3e4" stroke-width="1.4"/></svg>
<div class="a" style="left:1031px;top:146px;width:104px;height:29px;background:#fff;border:1px solid #b8b8b8;border-radius:3px"></div>
<svg class="a" style="left:1042px;top:153px" width="14" height="15" viewBox="0 0 14 15">
 <rect x="0.5" y="0.5" width="13" height="14" fill="#555"/>
 <rect x="1.5" y="7" width="11" height="1" fill="#fff"/>
 <path d="M4.5 3.5 L6 5 L9 2" stroke="#fff" stroke-width="1.1" fill="none"/>
 <path d="M5 9.5 L9 13.5 M9 9.5 L5 13.5" stroke="#fff" stroke-width="1.1"/>
</svg>
<div class="a" style="left:1061px;top:155px;font-size:12px;color:#333;letter-spacing:-0.42px">Click to View</div>

</body></html>
